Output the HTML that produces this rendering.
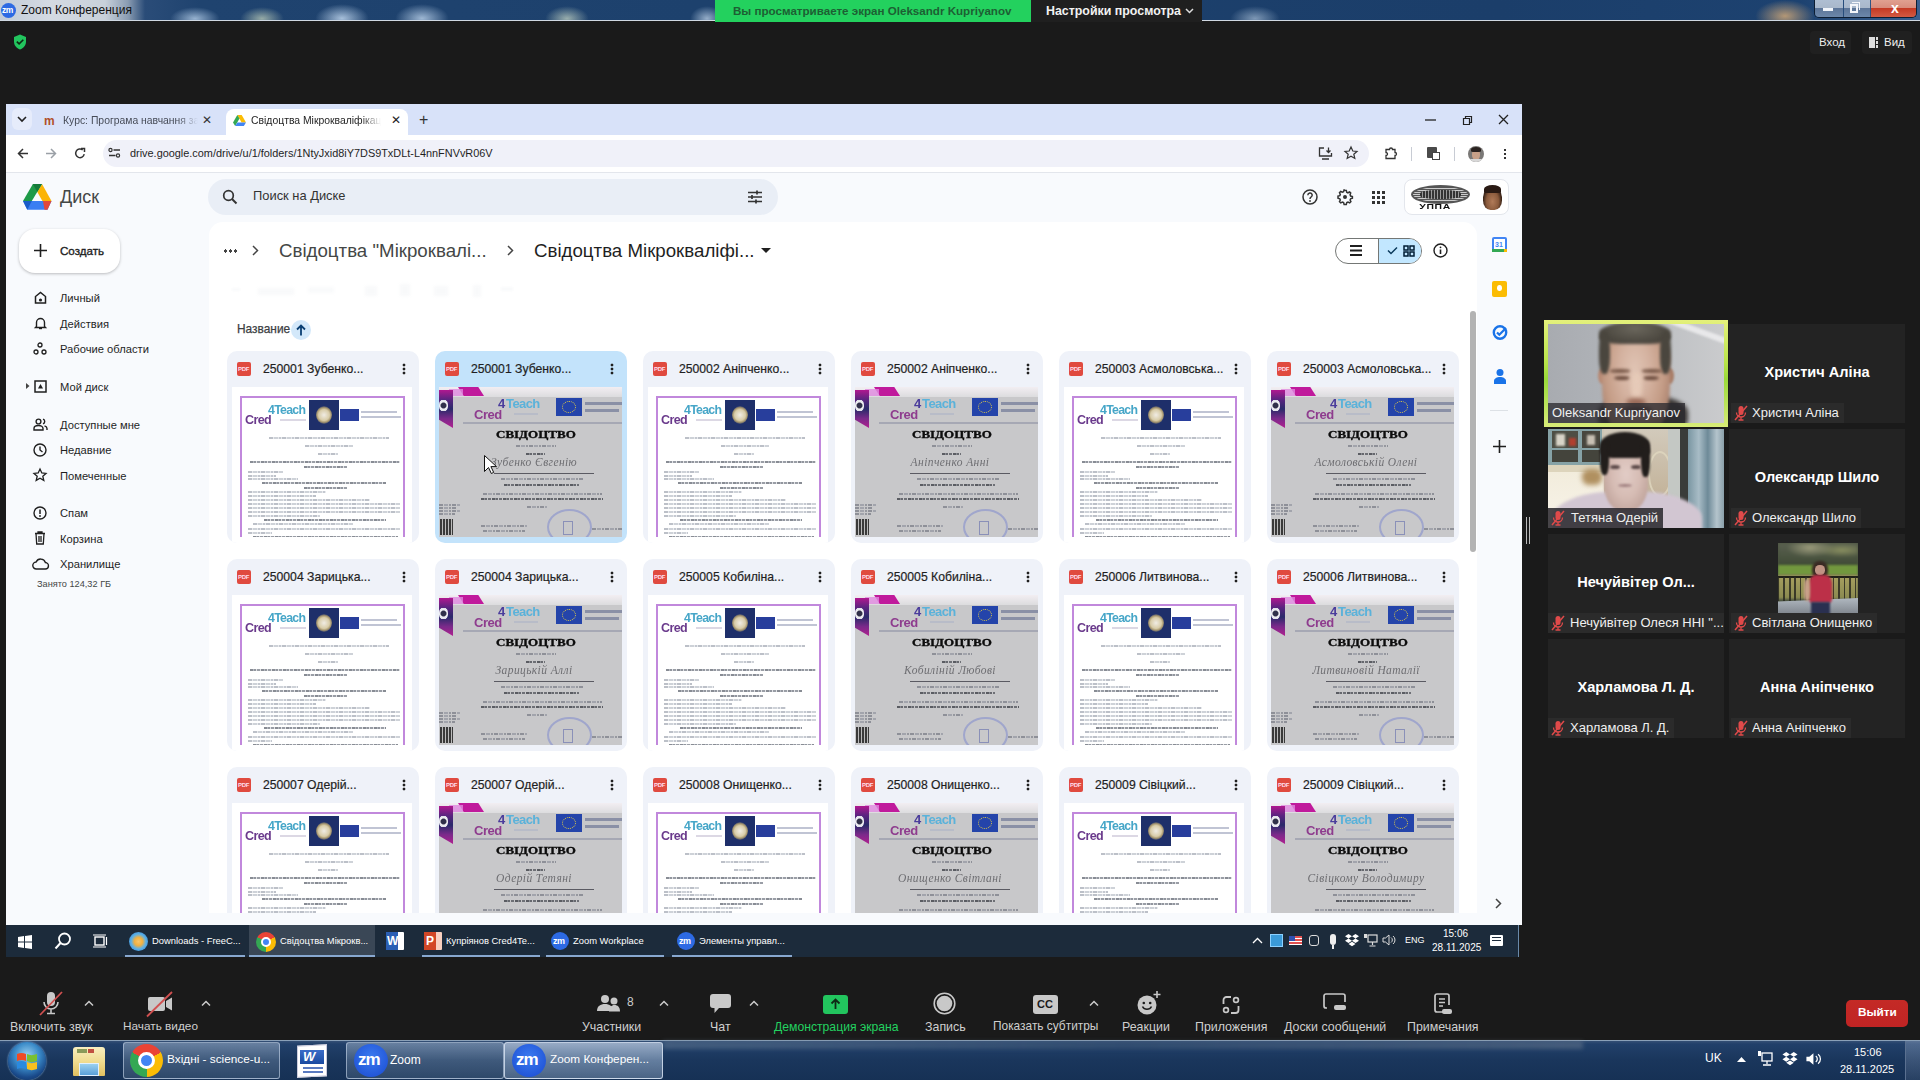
<!DOCTYPE html>
<html><head><meta charset="utf-8">
<style>
*{box-sizing:border-box;margin:0;padding:0}
html,body{width:1920px;height:1080px;overflow:hidden;background:#1a1a1a;font-family:"Liberation Sans",sans-serif}
.a{position:absolute}
.t{position:absolute;white-space:nowrap;line-height:1}
svg{position:absolute;overflow:visible}
.nav{position:absolute;left:60px;font-size:11.2px;color:#1f1f1f;white-space:nowrap;line-height:1}
.card{position:absolute;width:192px;height:192px;border-radius:10px;background:#eff2f9}
.card.sel{background:#c8e3fa}
.card .nm{position:absolute;left:36px;top:13px;font-size:12.5px;color:#1f1f1f;white-space:nowrap;line-height:1}
.card .pdf{position:absolute;left:10px;top:11px;width:13px;height:13px;background:#e2443a;border-radius:2px}
.card .pdf:after{content:"";position:absolute;left:2px;top:5px;width:9px;height:3px;background:#f6c9c4}
.card .kb{position:absolute;left:175px;top:12px;width:3px;height:12px;background:radial-gradient(circle,#333 1.2px,transparent 1.4px) 0 0/3px 4px}
.thw{position:absolute;left:5px;top:36px;width:180px;height:156px;background:#fff;border-radius:0 0 8px 8px;overflow:hidden}
.doc{position:absolute;left:8px;top:8px;width:166px;height:150px;border:2px solid #c46ed6;border-bottom:none;background:#fff}
.cert{position:absolute;left:2px;top:0;width:183px;height:150px;background:#c9c9cb}
.tl{position:absolute;height:2px;background:#9aa0aa}
.zt{position:absolute;background:#232323}
.zl{position:absolute;height:20px;background:#2b2b2b;color:#f0f0f0;font-size:13px;line-height:20px;white-space:nowrap;padding-right:5px}
.zn{position:absolute;color:#fff;font-size:14.6px;font-weight:bold;white-space:nowrap;line-height:1;text-align:center}
.dl{position:absolute;height:2px;background:repeating-linear-gradient(90deg,#888c94 0 3px,#b4b8c0 3px 4px,#92969e 4px 6px,rgba(180,184,192,.4) 6px 7px,#9a9ea6 7px 10px,rgba(180,184,192,.4) 10px 11px)}
.ll{position:absolute;height:2px;background:repeating-linear-gradient(90deg,#bcc0c8 0 4px,rgba(210,214,220,.5) 4px 5px,#ced2d8 5px 9px,rgba(210,214,220,.5) 9px 10px,#c4c8d0 10px 12px,rgba(210,214,220,.5) 12px 13px)}
.cll{position:absolute;height:2px;background:repeating-linear-gradient(90deg,#8e9098 0 4px,transparent 4px 5px,#a2a4ac 5px 9px,transparent 9px 10px,#96989f 10px 12px,transparent 12px 13px)}
.cdl{position:absolute;height:2px;background:repeating-linear-gradient(90deg,#5a5c62 0 3px,#8a8c92 3px 4px,#66686e 4px 6px,transparent 6px 7px,#6e7076 7px 10px,transparent 10px 11px)}
.tb{position:absolute;color:#cfcfcf;font-size:13px;white-space:nowrap;line-height:1;text-align:center}
</style></head>
<body>
<!-- ===== Windows title bar ===== -->
<div class="a" style="left:0;top:0;width:1920px;height:20px;background:linear-gradient(90deg,#c2ccd8 0,#d4dae2 50px,#c8d0da 105px,#8a9cb2 128px,#2a4c78 145px,#1f436f 200px,#1d416d 700px,#1b3e6a 1500px,#1d4270 1800px,#3a6090 1920px)"></div>
<div class="a" style="left:170px;top:7px;width:50px;height:13px;background:radial-gradient(ellipse at 50% 90%,rgba(190,215,240,.75),transparent 70%)"></div>
<div class="a" style="left:240px;top:7px;width:44px;height:13px;background:radial-gradient(ellipse at 50% 90%,rgba(200,215,190,.7),transparent 70%)"></div>
<div class="a" style="left:315px;top:4px;width:54px;height:16px;background:radial-gradient(ellipse at 50% 90%,rgba(200,222,245,.8),transparent 70%)"></div>
<div class="a" style="left:395px;top:4px;width:54px;height:16px;background:radial-gradient(ellipse at 50% 90%,rgba(200,222,245,.75),transparent 70%)"></div>
<div class="a" style="left:545px;top:6px;width:44px;height:14px;background:radial-gradient(ellipse at 50% 90%,rgba(205,220,200,.7),transparent 70%)"></div>
<div class="a" style="left:690px;top:6px;width:34px;height:14px;background:radial-gradient(ellipse at 50% 90%,rgba(200,220,240,.7),transparent 70%)"></div>
<div class="a" style="left:1230px;top:6px;width:50px;height:14px;background:radial-gradient(ellipse at 50% 90%,rgba(190,210,230,.6),transparent 70%)"></div>
<div class="a" style="left:1755px;top:0;width:60px;height:20px;background:radial-gradient(ellipse at 50% 80%,rgba(230,180,120,.75),transparent 70%)"></div>
<div class="a" style="left:1px;top:3px;width:15px;height:15px;border-radius:50%;background:#2d6ae3"></div>
<div class="t" style="left:2px;top:6px;font-size:8.5px;color:#fff;font-weight:bold;letter-spacing:-.5px">zm</div>
<div class="t" style="left:21px;top:4px;font-size:12px;color:#111">Zoom Конференция</div>
<div class="a" style="left:0;top:20px;width:1920px;height:1px;background:#d0d8e2"></div>
<!-- green banner -->
<div class="a" style="left:715px;top:0;width:316px;height:22px;background:#23d15e"></div>
<div class="t" style="left:733px;top:5px;font-size:11.6px;font-weight:bold;color:#1d5f33">Вы просматриваете экран Oleksandr Kupriyanov</div>
<div class="a" style="left:1031px;top:0;width:171px;height:22px;background:#1f1f1f"></div>
<div class="t" style="left:1046px;top:5px;font-size:12.4px;font-weight:bold;color:#f2f2f2">Настройки просмотра</div>
<svg style="left:1185px;top:8px" width="9" height="6"><path d="M1 1l3.5 3.5L8 1" stroke="#ddd" stroke-width="1.5" fill="none"/></svg>
<!-- window controls -->
<div class="a" style="left:1814px;top:0;width:103px;height:18px;border:1px solid #0d1e33;border-top:none;border-radius:0 0 5px 5px;overflow:hidden">
  <div class="a" style="left:0;top:0;width:28px;height:17px;background:linear-gradient(180deg,#aebed2 0,#a9b8cb 45%,#5d7699 50%,#6c87aa 100%)"></div>
  <div class="a" style="left:29px;top:0;width:26px;height:17px;background:linear-gradient(180deg,#aebed2 0,#a9b8cb 45%,#5d7699 50%,#6c87aa 100%)"></div>
  <div class="a" style="left:56px;top:0;width:47px;height:17px;background:linear-gradient(180deg,#e0a090 0,#d88c7c 45%,#c53a24 50%,#d25a42 100%)"></div>
  <div class="a" style="left:8px;top:8px;width:10px;height:3px;background:#f0f4fa"></div>
  <div class="a" style="left:37px;top:2px;width:8px;height:8px;border:1.5px solid #f4f6fa;border-left:none;border-bottom:none"></div><div class="a" style="left:35px;top:4px;width:8px;height:9px;border:2px solid #f4f6fa"></div>
  <div class="t" style="left:76px;top:1px;font-size:14px;font-weight:bold;color:#fff">x</div>
</div>

<!-- zoom top row -->
<svg style="left:13px;top:34px" width="14" height="16" viewBox="0 0 14 16"><path d="M7 0.5L1 3v4.5c0 3.8 2.6 6.8 6 8 3.4-1.2 6-4.2 6-8V3z" fill="#22c55e"/><path d="M3.8 7.6l2.3 2.3 4.2-4.2" stroke="#0c2a14" stroke-width="1.6" fill="none"/></svg>
<div class="a" style="left:1810px;top:31px;width:41px;height:23px;background:#202020;border-radius:4px"></div>
<div class="t" style="left:1819px;top:37px;font-size:11.5px;color:#eee">Вход</div>
<div class="a" style="left:1862px;top:31px;width:50px;height:23px;background:#202020;border-radius:4px"></div>
<div class="a" style="left:1869px;top:37px;width:6px;height:11px;background:#ddd"></div>
<div class="a" style="left:1876px;top:37px;width:2px;height:3px;background:#ddd"></div>
<div class="a" style="left:1876px;top:41px;width:2px;height:3px;background:#ddd"></div>
<div class="a" style="left:1876px;top:45px;width:2px;height:3px;background:#ddd"></div>
<div class="t" style="left:1884px;top:37px;font-size:11.5px;color:#eee">Вид</div>
<!-- ===== Browser window ===== -->
<div class="a" style="left:6px;top:104px;width:1516px;height:821px;background:#f8fafd;overflow:hidden"></div>
<!-- tab strip -->
<div class="a" style="left:6px;top:104px;width:1516px;height:31px;background:#d8e2f9"></div>
<div class="a" style="left:12px;top:108px;width:20px;height:22px;border-radius:6px;background:#e6ecfb"></div>
<svg style="left:17px;top:116px" width="10" height="6"><path d="M1 1l4 4 4-4" stroke="#222" stroke-width="1.6" fill="none"/></svg>
<div class="t" style="left:44px;top:115px;font-size:12px;font-weight:bold;color:#b0502a;letter-spacing:-1px">m</div>
<div class="a" style="left:63px;top:115px;width:135px;height:14px;overflow:hidden;-webkit-mask-image:linear-gradient(90deg,#000 85%,transparent)"><div class="t" style="left:0;top:1px;font-size:10.4px;color:#474c58">Курс: Програма навчання за і</div></div>
<div class="t" style="left:202px;top:114px;font-size:12px;color:#333">✕</div>
<!-- active tab -->
<div class="a" style="left:226px;top:109px;width:182px;height:27px;background:#fff;border-radius:8px 8px 0 0"></div>
<svg style="left:233px;top:115px" width="13" height="11" viewBox="0 0 13 11"><path d="M4.3 0h4.4l4.3 7.5H8.6z" fill="#fbbc04"/><path d="M4.3 0L0 7.5l2.2 3.5 4.3-7.5z" fill="#34a853"/><path d="M2.2 11h8.6L13 7.5H4.4z" fill="#4285f4"/></svg>
<div class="a" style="left:251px;top:115px;width:130px;height:14px;overflow:hidden;-webkit-mask-image:linear-gradient(90deg,#000 85%,transparent)"><div class="t" style="left:0;top:1px;font-size:10.4px;color:#1f1f1f">Свідоцтва Мікрокваліфікація:</div></div>
<div class="t" style="left:391px;top:114px;font-size:12px;color:#222">✕</div>
<div class="t" style="left:419px;top:112px;font-size:16px;color:#333">+</div>
<svg style="left:1425px;top:119px" width="11" height="2"><path d="M0 1h11" stroke="#222" stroke-width="1.3"/></svg>
<svg style="left:1462px;top:115px" width="11" height="10"><path d="M1.5 3.5h6v6h-6z M3.5 3.5V1.5h6v6h-2" stroke="#222" stroke-width="1.2" fill="none"/></svg>
<svg style="left:1498px;top:114px" width="11" height="11"><path d="M1 1l9 9M10 1l-9 9" stroke="#222" stroke-width="1.3"/></svg>
<!-- address row -->
<div class="a" style="left:6px;top:135px;width:1516px;height:37px;background:#fff"></div>
<svg style="left:17px;top:148px" width="12" height="11" viewBox="0 0 12 11"><path d="M11 5.5H1.5M6 1L1.5 5.5 6 10" stroke="#333" stroke-width="1.5" fill="none"/></svg>
<svg style="left:45px;top:148px" width="12" height="11" viewBox="0 0 12 11"><path d="M1 5.5h9.5M6 1l4.5 4.5L6 10" stroke="#9aa0a6" stroke-width="1.5" fill="none"/></svg>
<svg style="left:74px;top:147px" width="12" height="13" viewBox="0 0 12 13"><path d="M10.2 7.2A4.3 4.3 0 1 1 8.7 3" stroke="#333" stroke-width="1.5" fill="none"/><path d="M7 1.5h3.5V5" stroke="#333" stroke-width="1.5" fill="none"/></svg>
<div class="a" style="left:103px;top:140px;width:1266px;height:27px;border-radius:14px;background:#f0f1f9"></div>
<svg style="left:108px;top:147px" width="13" height="12" viewBox="0 0 13 12"><circle cx="2.5" cy="3" r="1.6" stroke="#333" stroke-width="1.2" fill="none"/><path d="M5.5 3h6.5M1 8.5h6.5" stroke="#333" stroke-width="1.4"/><circle cx="10" cy="8.5" r="1.6" stroke="#333" stroke-width="1.2" fill="none"/></svg>
<div class="t" style="left:130px;top:148px;font-size:10.9px;color:#1f1f1f">drive.google.com/drive/u/1/folders/1NtyJxid8iY7DS9TxDLt-L4nnFNVvR06V</div>
<svg style="left:1318px;top:147px" width="15" height="13" viewBox="0 0 15 13"><path d="M6 1H1.5v8h12V6" stroke="#333" stroke-width="1.3" fill="none"/><path d="M4 12h7M10.5 0.5v5M8.5 3.5l2 2 2-2" stroke="#333" stroke-width="1.3" fill="none"/></svg>
<svg style="left:1344px;top:146px" width="14" height="14" viewBox="0 0 14 14"><path d="M7 1l1.8 4 4.2.4-3.2 2.8 1 4.2L7 10.2 3.2 12.4l1-4.2L1 5.4l4.2-.4z" stroke="#333" stroke-width="1.2" fill="none"/></svg>
<svg style="left:1384px;top:146px" width="14" height="14" viewBox="0 0 14 14"><path d="M2 3.5h3.5a1.5 1.5 0 0 1 3 0H11v3a1.5 1.5 0 0 1 0 3v3H2v-3a1.5 1.5 0 0 0 0-3z" stroke="#333" stroke-width="1.3" fill="none"/></svg>
<div class="a" style="left:1411px;top:147px;width:1px;height:14px;background:#c8ccd4"></div>
<div class="a" style="left:1427px;top:147px;width:10px;height:11px;background:#4a4a4a;border-radius:1px"></div>
<div class="a" style="left:1432px;top:152px;width:8px;height:8px;background:#fff;border:1.5px solid #444"></div>
<div class="a" style="left:1454px;top:147px;width:1px;height:14px;background:#c8ccd4"></div>
<div class="a" style="left:1468px;top:146px;width:16px;height:16px;border-radius:50%;overflow:hidden;background:#7a7876"><div class="a" style="left:4px;top:3px;width:8px;height:11px;border-radius:45%;background:#c8a088"></div><div class="a" style="left:3px;top:1px;width:10px;height:5px;border-radius:50% 50% 20% 20%;background:#2a2220"></div><div class="a" style="left:2px;top:13px;width:12px;height:4px;background:#d8d8d8"></div></div>
<div class="a" style="left:1504px;top:148px;width:2px;height:11px;background:radial-gradient(circle,#333 1px,transparent 1.2px) 0 0/2px 4px"></div>
<div class="a" style="left:6px;top:172px;width:1516px;height:1px;background:#e3e6ec"></div>

<!-- ===== Drive header ===== -->
<svg style="left:23px;top:184px" width="29" height="26" viewBox="0 0 29 26"><path d="M9.9 0H19L8.8 16.9H0z" fill="#1e9a48"/><path d="M19 0l9.5 16.9h-9.1L14.3 8.1z" fill="#fbb406"/><path d="M0 16.9h28.5l-4 8.8H4.3z" fill="#3a7ef2"/><path d="M20 16.9h8.5l-4 8.8h-3z" fill="#e0483c"/><path d="M0 16.9h8.8l-4.5 8.8z" fill="#1a5cc8"/><path d="M9.9 0H19L14.3 8.1z" fill="#157a3a"/></svg>
<div class="t" style="left:60px;top:188px;font-size:18px;color:#444746">Диск</div>
<div class="a" style="left:208px;top:179px;width:570px;height:36px;border-radius:18px;background:#e9eef6"></div>
<svg style="left:222px;top:189px" width="16" height="16" viewBox="0 0 16 16"><circle cx="6.5" cy="6.5" r="4.8" stroke="#333" stroke-width="1.7" fill="none"/><path d="M10 10l4.5 4.5" stroke="#333" stroke-width="1.9"/></svg>
<div class="t" style="left:253px;top:190px;font-size:12.9px;color:#333">Поиск на Диске</div>
<svg style="left:747px;top:190px" width="16" height="14" viewBox="0 0 16 14"><path d="M1 2.5h14M1 7h14M1 11.5h14" stroke="#333" stroke-width="1.5"/><path d="M10 0.5v4M5 5v4M9 9.5v4" stroke="#333" stroke-width="1.7"/></svg>
<svg style="left:1302px;top:189px" width="16" height="16" viewBox="0 0 16 16"><circle cx="8" cy="8" r="7" stroke="#333" stroke-width="1.5" fill="none"/><path d="M5.8 6.2a2.2 2.2 0 1 1 3.2 2c-.8.4-1 .9-1 1.7" stroke="#333" stroke-width="1.5" fill="none"/><circle cx="8" cy="12" r=".9" fill="#333"/></svg>
<svg style="left:1337px;top:189px" width="16" height="16" viewBox="0 0 16 16"><path d="M8 1.2l1.3.2.4 1.8 1.2.6 1.7-.8 1.1 1 -.6 1.8.5 1.2 1.8.5v1.8l-1.8.5-.5 1.2.8 1.7-1.2 1.2-1.7-.8-1.2.5-.5 1.8H7.1l-.5-1.8-1.2-.5-1.7.8-1.2-1.2.8-1.7-.5-1.2-1.8-.5V7.1l1.8-.5.5-1.2-.8-1.7 1.2-1.2 1.7.8 1.2-.5.5-1.8z" stroke="#333" stroke-width="1.5" fill="none"/><circle cx="8" cy="8" r="2" fill="#333"/></svg>
<div class="a" style="left:1371px;top:190px;width:15px;height:15px;background:radial-gradient(circle,#333 1.5px,transparent 1.9px) 0 0/5px 5px"></div>
<div class="a" style="left:1404px;top:179px;width:105px;height:36px;border-radius:8px;background:#fff;border:1px solid #e3e6ec"></div>
<div class="a" style="left:1411px;top:185px;width:59px;height:19px;border-radius:50%;border:2px solid #555;background:repeating-linear-gradient(0deg,#555 0 1px,#ccc 1px 2px)"></div><div class="a" style="left:1420px;top:190px;width:41px;height:9px;border-radius:40%;background:repeating-linear-gradient(90deg,#333 0 2px,#999 2px 3px)"></div>
<div class="t" style="left:1423px;top:203px;font-size:8px;font-weight:bold;color:#111;letter-spacing:.5px;transform:scaleX(1.3)">УППА</div>
<div class="a" style="left:1483px;top:186px;width:19px;height:24px;border-radius:45% 45% 40% 40%;background:radial-gradient(ellipse at 50% 65%,#b07a58 0,#8a5a3c 45%,#3a2418 70%,rgba(255,255,255,0) 80%)"></div><div class="a" style="left:1484px;top:185px;width:17px;height:8px;border-radius:50% 50% 10% 10%;background:#2a1a14"></div>

<!-- ===== Drive sidebar ===== -->
<div class="a" style="left:19px;top:229px;width:101px;height:44px;border-radius:16px;background:#fff;box-shadow:0 1px 3px rgba(0,0,0,.25)"></div>
<svg style="left:34px;top:244px" width="13" height="13"><path d="M6.5 0v13M0 6.5h13" stroke="#1f1f1f" stroke-width="1.6"/></svg>
<div class="t" style="left:60px;top:245px;font-size:11.6px;color:#1f1f1f;-webkit-text-stroke:.35px #1f1f1f">Создать</div>
<!-- nav items -->
<svg style="left:34px;top:291px" width="13" height="13" viewBox="0 0 13 13"><path d="M1.5 12V5.5L6.5 1.5l5 4V12z" stroke="#1f1f1f" stroke-width="1.5" fill="none"/><circle cx="6.5" cy="9" r="1.6" fill="#1f1f1f"/></svg>
<div class="nav" style="top:293px">Личный</div>
<svg style="left:34px;top:316px" width="13" height="14" viewBox="0 0 13 14"><path d="M2.5 10.5V6.5a4 4 0 0 1 8 0v4l1 1h-10z" stroke="#1f1f1f" stroke-width="1.4" fill="none"/><path d="M5 12.5h3" stroke="#1f1f1f" stroke-width="1.4"/></svg>
<div class="nav" style="top:319px">Действия</div>
<svg style="left:33px;top:342px" width="14" height="13" viewBox="0 0 14 13"><circle cx="7" cy="3" r="2" stroke="#1f1f1f" stroke-width="1.3" fill="none"/><circle cx="3" cy="10" r="2" stroke="#1f1f1f" stroke-width="1.3" fill="none"/><circle cx="11" cy="10" r="2" stroke="#1f1f1f" stroke-width="1.3" fill="none"/></svg>
<div class="nav" style="top:344px">Рабочие области</div>
<svg style="left:26px;top:383px" width="4" height="6"><path d="M0 0l3.5 3L0 6z" fill="#444"/></svg>
<svg style="left:34px;top:380px" width="13" height="13" viewBox="0 0 13 13"><rect x="1" y="1" width="11" height="11" stroke="#1f1f1f" stroke-width="1.5" fill="none"/><path d="M4 8.5h5L6.5 4z" fill="#1f1f1f"/></svg>
<div class="nav" style="top:382px">Мой диск</div>
<svg style="left:33px;top:418px" width="15" height="13" viewBox="0 0 15 13"><circle cx="5.5" cy="3.5" r="2.4" stroke="#1f1f1f" stroke-width="1.4" fill="none"/><path d="M1 12v-1.5c0-2 2-3 4.5-3s4.5 1 4.5 3V12z" stroke="#1f1f1f" stroke-width="1.4" fill="none"/><path d="M10 1.2a2.4 2.4 0 0 1 0 4.6M11.5 7.8c1.5.5 2.5 1.3 2.5 2.7V12" stroke="#1f1f1f" stroke-width="1.4" fill="none"/></svg>
<div class="nav" style="top:420px">Доступные мне</div>
<svg style="left:33px;top:443px" width="14" height="14" viewBox="0 0 14 14"><circle cx="7" cy="7" r="6" stroke="#1f1f1f" stroke-width="1.4" fill="none"/><path d="M7 3.5V7l2.5 2" stroke="#1f1f1f" stroke-width="1.4" fill="none"/></svg>
<div class="nav" style="top:445px">Недавние</div>
<svg style="left:33px;top:468px" width="14" height="14" viewBox="0 0 14 14"><path d="M7 1l1.8 4 4.2.4-3.2 2.8 1 4.2L7 10.2 3.2 12.4l1-4.2L1 5.4l4.2-.4z" stroke="#1f1f1f" stroke-width="1.3" fill="none"/></svg>
<div class="nav" style="top:471px">Помеченные</div>
<svg style="left:33px;top:506px" width="14" height="14" viewBox="0 0 14 14"><circle cx="7" cy="7" r="6" stroke="#1f1f1f" stroke-width="1.4" fill="none"/><path d="M7 3.5v4.5" stroke="#1f1f1f" stroke-width="1.5"/><circle cx="7" cy="10" r=".9" fill="#1f1f1f"/></svg>
<div class="nav" style="top:508px">Спам</div>
<svg style="left:34px;top:531px" width="12" height="14" viewBox="0 0 12 14"><path d="M1 2.5h10M4 2.5V1h4v1.5M2 2.5l.7 10.5h6.6L10 2.5M5 5v6M7 5v6" stroke="#1f1f1f" stroke-width="1.3" fill="none"/></svg>
<div class="nav" style="top:534px">Корзина</div>
<svg style="left:32px;top:558px" width="17" height="12" viewBox="0 0 17 12"><path d="M4.5 11a3.5 3.5 0 0 1-.4-7A5 5 0 0 1 13.4 4.5 3.2 3.2 0 0 1 13 11z" stroke="#1f1f1f" stroke-width="1.4" fill="none"/></svg>
<div class="nav" style="top:559px">Хранилище</div>
<div class="t" style="left:37px;top:580px;font-size:9.2px;color:#444746">Занято 124,32 ГБ</div>

<!-- ===== Main panel ===== -->
<div class="a" style="left:209px;top:222px;width:1268px;height:703px;background:#fff;border-radius:14px 14px 0 0"></div>
<div class="a" style="left:223px;top:249px;width:14px;height:4px;background:radial-gradient(circle,#444 1.5px,transparent 1.8px) 0 0/5px 4px"></div>
<svg style="left:252px;top:245px" width="7" height="11"><path d="M1 1l4.5 4.5L1 10" stroke="#444" stroke-width="1.5" fill="none"/></svg>
<div class="t" style="left:279px;top:242px;font-size:18.7px;color:#444746">Свідоцтва "Мікроквалі...</div>
<svg style="left:507px;top:245px" width="7" height="11"><path d="M1 1l4.5 4.5L1 10" stroke="#444" stroke-width="1.5" fill="none"/></svg>
<div class="t" style="left:534px;top:242px;font-size:18.7px;color:#1f1f1f">Свідоцтва Мікрокваліфі...</div>
<svg style="left:761px;top:248px" width="10" height="6"><path d="M0 0h10L5 5z" fill="#1f1f1f"/></svg>
<!-- view toggle -->
<div class="a" style="left:1335px;top:238px;width:87px;height:26px;border-radius:13px;border:1px solid #747775;background:#fff;overflow:hidden">
  <div class="a" style="left:42px;top:0;width:45px;height:26px;background:#c2e7ff;border-left:1px solid #747775"></div>
</div>
<svg style="left:1350px;top:245px" width="12" height="11"><path d="M0 1h12M0 5.5h12M0 10h12" stroke="#1f1f1f" stroke-width="1.8"/></svg>
<svg style="left:1387px;top:246px" width="11" height="9"><path d="M1 4.5l3 3L10 1.5" stroke="#0b3a5c" stroke-width="1.5" fill="none"/></svg>
<svg style="left:1403px;top:245px" width="12" height="12" viewBox="0 0 12 12"><path d="M1 1h4v4H1zM7 1h4v4H7zM1 7h4v4H1zM7 7h4v4H7z" stroke="#001d35" stroke-width="1.5" fill="none"/></svg>
<svg style="left:1433px;top:243px" width="15" height="15" viewBox="0 0 15 15"><circle cx="7.5" cy="7.5" r="6.5" stroke="#1f1f1f" stroke-width="1.4" fill="none"/><path d="M7.5 6.5v4.5" stroke="#1f1f1f" stroke-width="1.6"/><circle cx="7.5" cy="4.3" r=".9" fill="#1f1f1f"/></svg>
<!-- faded filter row -->
<div class="a" style="left:232px;top:288px;width:8px;height:3px;background:rgba(215,220,228,.15);filter:blur(1px)"></div>
<div class="a" style="left:258px;top:288px;width:36px;height:7px;background:rgba(215,220,228,.18);filter:blur(1.5px)"></div>
<div class="a" style="left:308px;top:287px;width:26px;height:6px;background:rgba(215,220,228,.15);filter:blur(1.5px)"></div>
<div class="a" style="left:365px;top:286px;width:12px;height:10px;background:rgba(215,220,228,.18);filter:blur(1.5px)"></div>
<div class="a" style="left:400px;top:284px;width:10px;height:12px;background:rgba(215,220,228,.18);filter:blur(1.5px)"></div>
<div class="a" style="left:434px;top:286px;width:14px;height:10px;background:rgba(215,220,228,.18);filter:blur(1.5px)"></div>
<div class="a" style="left:473px;top:285px;width:8px;height:12px;background:rgba(215,220,228,.18);filter:blur(1.5px)"></div>
<div class="a" style="left:501px;top:287px;width:12px;height:4px;background:rgba(215,220,228,.15);filter:blur(1px)"></div>
<!-- sort header -->
<div class="t" style="left:237px;top:324px;font-size:11.9px;color:#3c4043;-webkit-text-stroke:.25px #3c4043">Название</div>
<div class="a" style="left:291px;top:320px;width:20px;height:20px;border-radius:50%;background:#d3e8fa"></div>
<svg style="left:296px;top:324px" width="10" height="12" viewBox="0 0 10 12"><path d="M5 11.5V1.5M1 5.5l4-4 4 4" stroke="#0a3f73" stroke-width="1.8" fill="none"/></svg>
<!-- scrollbar -->
<div class="a" style="left:1470px;top:311px;width:6px;height:241px;border-radius:3px;background:#b3b3b3"></div>
<!-- right side panel icons -->
<div class="a" style="left:1492px;top:237px;width:15px;height:15px;border-radius:2px;background:#4285f4"></div>
<div class="a" style="left:1494px;top:239px;width:11px;height:10px;background:#fff"></div>
<div class="a" style="left:1492px;top:249px;width:12px;height:3px;background:#34a853"></div>
<div class="a" style="left:1504px;top:249px;width:3px;height:3px;background:#fbbc04"></div>
<div class="t" style="left:1495px;top:241px;font-size:7px;color:#4285f4;font-weight:bold">31</div>
<div class="a" style="left:1492px;top:281px;width:15px;height:16px;border-radius:2px;background:#fbbc04"></div>
<div class="a" style="left:1497px;top:285px;width:5px;height:6px;border-radius:50% 50% 40% 40%;background:#fff"></div>
<svg style="left:1492px;top:324px" width="16" height="16" viewBox="0 0 16 16"><circle cx="8" cy="8.5" r="6.2" stroke="#1a73e8" stroke-width="2.4" fill="none"/><path d="M5 8.5l2.3 2.3L14 4" stroke="#1a73e8" stroke-width="2.2" fill="none"/></svg>
<svg style="left:1493px;top:368px" width="14" height="16" viewBox="0 0 14 16"><circle cx="7" cy="4.5" r="3.5" fill="#1a73e8"/><path d="M1 16v-3c0-2.5 3-4 6-4s6 1.5 6 4v3z" fill="#1a73e8"/></svg>
<div class="a" style="left:1490px;top:410px;width:18px;height:1px;background:#dde1e6"></div>
<svg style="left:1493px;top:440px" width="13" height="13"><path d="M6.5 0v13M0 6.5h13" stroke="#1f1f1f" stroke-width="1.6"/></svg>
<svg style="left:1495px;top:898px" width="7" height="11"><path d="M1 1l4.5 4.5L1 10" stroke="#444" stroke-width="1.5" fill="none"/></svg>
<div class="a" style="left:209px;top:300px;width:1260px;height:613px;overflow:hidden">
<div class="a" style="left:18px;top:51px;width:192px;height:192px;border-radius:10px;background:#eff2f9;overflow:hidden">
<div class="a" style="left:10px;top:11px;width:14px;height:14px;background:#e04a3f;border-radius:2px"></div>
<div class="t" style="left:11px;top:15px;font-size:6px;font-weight:bold;color:#fde;letter-spacing:-.3px">PDF</div>
<div class="t" style="left:36px;top:12px;font-size:12.2px;color:#1f1f1f;-webkit-text-stroke:.2px #1f1f1f">250001 Зубенко...</div>
<div class="a" style="left:175px;top:12px;width:4px;height:12px;background:radial-gradient(circle,#1f1f1f 1.2px,transparent 1.7px) 0 0/4px 4px"></div>
<div class="a" style="left:5px;top:36px;width:180px;height:156px;background:#fff"></div>
<div class="a" style="left:13px;top:45px;width:165px;height:141px;border:2px solid #c188dc;border-bottom:none;overflow:hidden;filter:blur(.35px)">
<div class="t" style="left:3px;top:16px;font-size:12.5px;font-weight:bold;color:#6a3a8c;letter-spacing:-.6px">Cred</div>
<div class="t" style="left:26px;top:6px;font-size:12.3px;font-weight:bold;color:#46a6c8;letter-spacing:-.7px">4Teach</div>
<div class="a" style="left:38px;top:21px;width:26px;height:2px;background:#dcd8e4"></div>
<div class="a" style="left:67px;top:2px;width:30px;height:30px;background:#1e2f6a"></div>
<div class="a" style="left:74px;top:8px;width:16px;height:18px;border-radius:50%;background:radial-gradient(circle,#f0ece4 0,#d8cca8 45%,#a89870 60%,#1e2f6a 78%)"></div>
<div class="a" style="left:98px;top:11px;width:19px;height:12px;background:#283e9c"></div>
<div class="a" style="left:119px;top:13px;width:36px;height:2px;background:#c0c4d4"></div>
<div class="a" style="left:119px;top:18px;width:40px;height:2px;background:#c0c4d4"></div>
<div class="ll" style="left:27px;top:39px;width:120px"></div>
<div class="ll" style="left:63px;top:47px;width:48px"></div>
<div class="ll" style="left:76px;top:55px;width:20px"></div>
<div class="dl" style="left:8px;top:63px;width:150px"></div>
<div class="dl" style="left:62px;top:68px;width:43px"></div>
<div class="ll" style="left:6px;top:73px;width:35px"></div>
<div class="ll" style="left:6px;top:77px;width:28px"></div>
<div class="ll" style="left:6px;top:80px;width:50px"></div>
<div class="dl" style="left:20px;top:84px;width:124px"></div>
<div class="dl" style="left:62px;top:89px;width:43px"></div>
<div class="ll" style="left:6px;top:93px;width:78px"></div>
<div class="ll" style="left:6px;top:97px;width:68px"></div>
<div class="ll" style="left:6px;top:101px;width:122px"></div>
<div class="ll" style="left:6px;top:105px;width:152px"></div>
<div class="ll" style="left:6px;top:109px;width:152px"></div>
<div class="ll" style="left:6px;top:113px;width:152px"></div>
<div class="ll" style="left:6px;top:117px;width:72px"></div>
<div class="dl" style="left:22px;top:121px;width:122px"></div>
<div class="ll" style="left:11px;top:125px;width:100px"></div>
<div class="ll" style="left:6px;top:130px;width:152px"></div>
<div class="ll" style="left:6px;top:134px;width:24px"></div>
<div class="dl" style="left:11px;top:138px;width:145px"></div>
</div>
</div>
<div class="a" style="left:226px;top:51px;width:192px;height:192px;border-radius:10px;background:#c3e3fb;overflow:hidden">
<div class="a" style="left:10px;top:11px;width:14px;height:14px;background:#e04a3f;border-radius:2px"></div>
<div class="t" style="left:11px;top:15px;font-size:6px;font-weight:bold;color:#fde;letter-spacing:-.3px">PDF</div>
<div class="t" style="left:36px;top:12px;font-size:12.2px;color:#1f1f1f;-webkit-text-stroke:.2px #1f1f1f">250001 Зубенко...</div>
<div class="a" style="left:175px;top:12px;width:4px;height:12px;background:radial-gradient(circle,#1f1f1f 1.2px,transparent 1.7px) 0 0/4px 4px"></div>
<div class="a" style="left:4px;top:36px;width:183px;height:150px;background:#c8c8ca;overflow:hidden;filter:blur(.3px)">
<div class="a" style="left:0;top:0;width:183px;height:10px;background:linear-gradient(180deg,#f2eef2,#dcdcde)"></div>
<div class="a" style="left:19px;top:0;width:26px;height:9px;background:#c01a9c;clip-path:polygon(0 0,78% 0,100% 100%,22% 100%)"></div>
<div class="a" style="left:10px;top:2px;width:14px;height:7px;background:#e088e0;opacity:.8"></div>
<div class="a" style="left:0;top:3px;width:14px;height:38px;background:linear-gradient(180deg,#b01890 0,#5a2480 25%,#2a2a6a 50%,#7a2a8a 75%,#b02090 100%);clip-path:polygon(0 0,100% 0,100% 100%,0 78%)"></div>
<div class="a" style="left:0;top:12px;width:9px;height:13px;border-radius:45%;background:radial-gradient(circle,#30304a 0,#30304a 30%,#f0f0f4 45%,#e0e0ea 70%,transparent 75%)"></div>
<div class="t" style="left:35px;top:21px;font-size:13px;font-weight:bold;color:#8e3c8e;letter-spacing:-.5px">Cred</div>
<div class="t" style="left:59px;top:10px;font-size:13px;font-weight:bold;color:#4a3c9c">4</div>
<div class="t" style="left:67px;top:10px;font-size:13px;font-weight:bold;color:#5ab2da;letter-spacing:-.6px">Teach</div>
<div class="a" style="left:75px;top:26px;width:24px;height:2px;background:#b8bcc8"></div>
<div class="a" style="left:117px;top:11px;width:26px;height:18px;background:#2444aa"></div>
<div class="a" style="left:123px;top:14px;width:14px;height:12px;border-radius:50%;border:1px dotted #e8d040"></div>
<div class="a" style="left:146px;top:15px;width:37px;height:3px;background:#8a90a6"></div>
<div class="a" style="left:146px;top:22px;width:34px;height:3px;background:#8a90a6"></div>
<div class="a" style="left:24px;top:35px;width:159px;height:2px;background:#a6a8b4"></div>
<div class="t" style="left:57px;top:42px;font-size:13px;font-weight:bold;color:#0d0d0d;font-family:'Liberation Serif',serif;transform:scaleY(.8);transform-origin:0 0;-webkit-text-stroke:.4px #000">СВІДОЦТВО</div>
<div class="cll" style="left:77px;top:58px;width:40px"></div>
<div class="cdl" style="left:87px;top:66px;width:19px"></div>
<div class="a" style="left:55px;top:86px;width:100px;height:1px;background:#5a5a62"></div>
<div class="cll" style="left:62px;top:91px;width:83px"></div>
<div class="cdl" style="left:65px;top:97px;width:75px"></div>
<div class="cll" style="left:44px;top:106px;width:119px"></div>
<div class="cdl" style="left:42px;top:111px;width:122px"></div>
<div class="cll" style="left:88px;top:119px;width:20px"></div>
<div class="cll" style="left:0px;top:117px;width:21px"></div>
<div class="cll" style="left:0px;top:120px;width:18px"></div>
<div class="cll" style="left:0px;top:123px;width:21px"></div>
<div class="cll" style="left:0px;top:126px;width:16px"></div>
<div class="cll" style="left:42px;top:138px;width:46px"></div>
<div class="cll" style="left:44px;top:143px;width:42px"></div>
<div class="cll" style="left:153px;top:141px;width:30px"></div>
<div class="t" style="left:10px;top:70px;width:170px;text-align:center;font-size:11.5px;font-style:italic;color:#6e6e72;font-family:'Liberation Serif',serif;letter-spacing:.4px">Зубенко Євгенію</div>
<div class="a" style="left:1px;top:132px;width:13px;height:16px;background:repeating-linear-gradient(90deg,#3a3a3a 0 2px,#bbb 2px 3px)"></div>
<div class="a" style="left:108px;top:122px;width:45px;height:36px;border-radius:50%;border:2px solid #a0a6cc"></div>
<div class="a" style="left:124px;top:134px;width:10px;height:14px;border:1px solid #8a90b8"></div>
</div>
</div>
<div class="a" style="left:434px;top:51px;width:192px;height:192px;border-radius:10px;background:#eff2f9;overflow:hidden">
<div class="a" style="left:10px;top:11px;width:14px;height:14px;background:#e04a3f;border-radius:2px"></div>
<div class="t" style="left:11px;top:15px;font-size:6px;font-weight:bold;color:#fde;letter-spacing:-.3px">PDF</div>
<div class="t" style="left:36px;top:12px;font-size:12.2px;color:#1f1f1f;-webkit-text-stroke:.2px #1f1f1f">250002 Аніпченко...</div>
<div class="a" style="left:175px;top:12px;width:4px;height:12px;background:radial-gradient(circle,#1f1f1f 1.2px,transparent 1.7px) 0 0/4px 4px"></div>
<div class="a" style="left:5px;top:36px;width:180px;height:156px;background:#fff"></div>
<div class="a" style="left:13px;top:45px;width:165px;height:141px;border:2px solid #c188dc;border-bottom:none;overflow:hidden;filter:blur(.35px)">
<div class="t" style="left:3px;top:16px;font-size:12.5px;font-weight:bold;color:#6a3a8c;letter-spacing:-.6px">Cred</div>
<div class="t" style="left:26px;top:6px;font-size:12.3px;font-weight:bold;color:#46a6c8;letter-spacing:-.7px">4Teach</div>
<div class="a" style="left:38px;top:21px;width:26px;height:2px;background:#dcd8e4"></div>
<div class="a" style="left:67px;top:2px;width:30px;height:30px;background:#1e2f6a"></div>
<div class="a" style="left:74px;top:8px;width:16px;height:18px;border-radius:50%;background:radial-gradient(circle,#f0ece4 0,#d8cca8 45%,#a89870 60%,#1e2f6a 78%)"></div>
<div class="a" style="left:98px;top:11px;width:19px;height:12px;background:#283e9c"></div>
<div class="a" style="left:119px;top:13px;width:36px;height:2px;background:#c0c4d4"></div>
<div class="a" style="left:119px;top:18px;width:40px;height:2px;background:#c0c4d4"></div>
<div class="ll" style="left:27px;top:39px;width:120px"></div>
<div class="ll" style="left:63px;top:47px;width:48px"></div>
<div class="ll" style="left:76px;top:55px;width:20px"></div>
<div class="dl" style="left:8px;top:63px;width:150px"></div>
<div class="dl" style="left:62px;top:68px;width:43px"></div>
<div class="ll" style="left:6px;top:73px;width:35px"></div>
<div class="ll" style="left:6px;top:77px;width:28px"></div>
<div class="ll" style="left:6px;top:80px;width:50px"></div>
<div class="dl" style="left:20px;top:84px;width:124px"></div>
<div class="dl" style="left:62px;top:89px;width:43px"></div>
<div class="ll" style="left:6px;top:93px;width:78px"></div>
<div class="ll" style="left:6px;top:97px;width:68px"></div>
<div class="ll" style="left:6px;top:101px;width:122px"></div>
<div class="ll" style="left:6px;top:105px;width:152px"></div>
<div class="ll" style="left:6px;top:109px;width:152px"></div>
<div class="ll" style="left:6px;top:113px;width:152px"></div>
<div class="ll" style="left:6px;top:117px;width:72px"></div>
<div class="dl" style="left:22px;top:121px;width:122px"></div>
<div class="ll" style="left:11px;top:125px;width:100px"></div>
<div class="ll" style="left:6px;top:130px;width:152px"></div>
<div class="ll" style="left:6px;top:134px;width:24px"></div>
<div class="dl" style="left:11px;top:138px;width:145px"></div>
</div>
</div>
<div class="a" style="left:642px;top:51px;width:192px;height:192px;border-radius:10px;background:#eff2f9;overflow:hidden">
<div class="a" style="left:10px;top:11px;width:14px;height:14px;background:#e04a3f;border-radius:2px"></div>
<div class="t" style="left:11px;top:15px;font-size:6px;font-weight:bold;color:#fde;letter-spacing:-.3px">PDF</div>
<div class="t" style="left:36px;top:12px;font-size:12.2px;color:#1f1f1f;-webkit-text-stroke:.2px #1f1f1f">250002 Аніпченко...</div>
<div class="a" style="left:175px;top:12px;width:4px;height:12px;background:radial-gradient(circle,#1f1f1f 1.2px,transparent 1.7px) 0 0/4px 4px"></div>
<div class="a" style="left:4px;top:36px;width:183px;height:150px;background:#c8c8ca;overflow:hidden;filter:blur(.3px)">
<div class="a" style="left:0;top:0;width:183px;height:10px;background:linear-gradient(180deg,#f2eef2,#dcdcde)"></div>
<div class="a" style="left:19px;top:0;width:26px;height:9px;background:#c01a9c;clip-path:polygon(0 0,78% 0,100% 100%,22% 100%)"></div>
<div class="a" style="left:10px;top:2px;width:14px;height:7px;background:#e088e0;opacity:.8"></div>
<div class="a" style="left:0;top:3px;width:14px;height:38px;background:linear-gradient(180deg,#b01890 0,#5a2480 25%,#2a2a6a 50%,#7a2a8a 75%,#b02090 100%);clip-path:polygon(0 0,100% 0,100% 100%,0 78%)"></div>
<div class="a" style="left:0;top:12px;width:9px;height:13px;border-radius:45%;background:radial-gradient(circle,#30304a 0,#30304a 30%,#f0f0f4 45%,#e0e0ea 70%,transparent 75%)"></div>
<div class="t" style="left:35px;top:21px;font-size:13px;font-weight:bold;color:#8e3c8e;letter-spacing:-.5px">Cred</div>
<div class="t" style="left:59px;top:10px;font-size:13px;font-weight:bold;color:#4a3c9c">4</div>
<div class="t" style="left:67px;top:10px;font-size:13px;font-weight:bold;color:#5ab2da;letter-spacing:-.6px">Teach</div>
<div class="a" style="left:75px;top:26px;width:24px;height:2px;background:#b8bcc8"></div>
<div class="a" style="left:117px;top:11px;width:26px;height:18px;background:#2444aa"></div>
<div class="a" style="left:123px;top:14px;width:14px;height:12px;border-radius:50%;border:1px dotted #e8d040"></div>
<div class="a" style="left:146px;top:15px;width:37px;height:3px;background:#8a90a6"></div>
<div class="a" style="left:146px;top:22px;width:34px;height:3px;background:#8a90a6"></div>
<div class="a" style="left:24px;top:35px;width:159px;height:2px;background:#a6a8b4"></div>
<div class="t" style="left:57px;top:42px;font-size:13px;font-weight:bold;color:#0d0d0d;font-family:'Liberation Serif',serif;transform:scaleY(.8);transform-origin:0 0;-webkit-text-stroke:.4px #000">СВІДОЦТВО</div>
<div class="cll" style="left:77px;top:58px;width:40px"></div>
<div class="cdl" style="left:87px;top:66px;width:19px"></div>
<div class="a" style="left:55px;top:86px;width:100px;height:1px;background:#5a5a62"></div>
<div class="cll" style="left:62px;top:91px;width:83px"></div>
<div class="cdl" style="left:65px;top:97px;width:75px"></div>
<div class="cll" style="left:44px;top:106px;width:119px"></div>
<div class="cdl" style="left:42px;top:111px;width:122px"></div>
<div class="cll" style="left:88px;top:119px;width:20px"></div>
<div class="cll" style="left:0px;top:117px;width:21px"></div>
<div class="cll" style="left:0px;top:120px;width:18px"></div>
<div class="cll" style="left:0px;top:123px;width:21px"></div>
<div class="cll" style="left:0px;top:126px;width:16px"></div>
<div class="cll" style="left:42px;top:138px;width:46px"></div>
<div class="cll" style="left:44px;top:143px;width:42px"></div>
<div class="cll" style="left:153px;top:141px;width:30px"></div>
<div class="t" style="left:10px;top:70px;width:170px;text-align:center;font-size:11.5px;font-style:italic;color:#6e6e72;font-family:'Liberation Serif',serif;letter-spacing:.4px">Аніпченко Анні</div>
<div class="a" style="left:1px;top:132px;width:13px;height:16px;background:repeating-linear-gradient(90deg,#3a3a3a 0 2px,#bbb 2px 3px)"></div>
<div class="a" style="left:108px;top:122px;width:45px;height:36px;border-radius:50%;border:2px solid #a0a6cc"></div>
<div class="a" style="left:124px;top:134px;width:10px;height:14px;border:1px solid #8a90b8"></div>
</div>
</div>
<div class="a" style="left:850px;top:51px;width:192px;height:192px;border-radius:10px;background:#eff2f9;overflow:hidden">
<div class="a" style="left:10px;top:11px;width:14px;height:14px;background:#e04a3f;border-radius:2px"></div>
<div class="t" style="left:11px;top:15px;font-size:6px;font-weight:bold;color:#fde;letter-spacing:-.3px">PDF</div>
<div class="t" style="left:36px;top:12px;font-size:12.2px;color:#1f1f1f;-webkit-text-stroke:.2px #1f1f1f">250003 Асмоловська...</div>
<div class="a" style="left:175px;top:12px;width:4px;height:12px;background:radial-gradient(circle,#1f1f1f 1.2px,transparent 1.7px) 0 0/4px 4px"></div>
<div class="a" style="left:5px;top:36px;width:180px;height:156px;background:#fff"></div>
<div class="a" style="left:13px;top:45px;width:165px;height:141px;border:2px solid #c188dc;border-bottom:none;overflow:hidden;filter:blur(.35px)">
<div class="t" style="left:3px;top:16px;font-size:12.5px;font-weight:bold;color:#6a3a8c;letter-spacing:-.6px">Cred</div>
<div class="t" style="left:26px;top:6px;font-size:12.3px;font-weight:bold;color:#46a6c8;letter-spacing:-.7px">4Teach</div>
<div class="a" style="left:38px;top:21px;width:26px;height:2px;background:#dcd8e4"></div>
<div class="a" style="left:67px;top:2px;width:30px;height:30px;background:#1e2f6a"></div>
<div class="a" style="left:74px;top:8px;width:16px;height:18px;border-radius:50%;background:radial-gradient(circle,#f0ece4 0,#d8cca8 45%,#a89870 60%,#1e2f6a 78%)"></div>
<div class="a" style="left:98px;top:11px;width:19px;height:12px;background:#283e9c"></div>
<div class="a" style="left:119px;top:13px;width:36px;height:2px;background:#c0c4d4"></div>
<div class="a" style="left:119px;top:18px;width:40px;height:2px;background:#c0c4d4"></div>
<div class="ll" style="left:27px;top:39px;width:120px"></div>
<div class="ll" style="left:63px;top:47px;width:48px"></div>
<div class="ll" style="left:76px;top:55px;width:20px"></div>
<div class="dl" style="left:8px;top:63px;width:150px"></div>
<div class="dl" style="left:62px;top:68px;width:43px"></div>
<div class="ll" style="left:6px;top:73px;width:35px"></div>
<div class="ll" style="left:6px;top:77px;width:28px"></div>
<div class="ll" style="left:6px;top:80px;width:50px"></div>
<div class="dl" style="left:20px;top:84px;width:124px"></div>
<div class="dl" style="left:62px;top:89px;width:43px"></div>
<div class="ll" style="left:6px;top:93px;width:78px"></div>
<div class="ll" style="left:6px;top:97px;width:68px"></div>
<div class="ll" style="left:6px;top:101px;width:122px"></div>
<div class="ll" style="left:6px;top:105px;width:152px"></div>
<div class="ll" style="left:6px;top:109px;width:152px"></div>
<div class="ll" style="left:6px;top:113px;width:152px"></div>
<div class="ll" style="left:6px;top:117px;width:72px"></div>
<div class="dl" style="left:22px;top:121px;width:122px"></div>
<div class="ll" style="left:11px;top:125px;width:100px"></div>
<div class="ll" style="left:6px;top:130px;width:152px"></div>
<div class="ll" style="left:6px;top:134px;width:24px"></div>
<div class="dl" style="left:11px;top:138px;width:145px"></div>
</div>
</div>
<div class="a" style="left:1058px;top:51px;width:192px;height:192px;border-radius:10px;background:#eff2f9;overflow:hidden">
<div class="a" style="left:10px;top:11px;width:14px;height:14px;background:#e04a3f;border-radius:2px"></div>
<div class="t" style="left:11px;top:15px;font-size:6px;font-weight:bold;color:#fde;letter-spacing:-.3px">PDF</div>
<div class="t" style="left:36px;top:12px;font-size:12.2px;color:#1f1f1f;-webkit-text-stroke:.2px #1f1f1f">250003 Асмоловська...</div>
<div class="a" style="left:175px;top:12px;width:4px;height:12px;background:radial-gradient(circle,#1f1f1f 1.2px,transparent 1.7px) 0 0/4px 4px"></div>
<div class="a" style="left:4px;top:36px;width:183px;height:150px;background:#c8c8ca;overflow:hidden;filter:blur(.3px)">
<div class="a" style="left:0;top:0;width:183px;height:10px;background:linear-gradient(180deg,#f2eef2,#dcdcde)"></div>
<div class="a" style="left:19px;top:0;width:26px;height:9px;background:#c01a9c;clip-path:polygon(0 0,78% 0,100% 100%,22% 100%)"></div>
<div class="a" style="left:10px;top:2px;width:14px;height:7px;background:#e088e0;opacity:.8"></div>
<div class="a" style="left:0;top:3px;width:14px;height:38px;background:linear-gradient(180deg,#b01890 0,#5a2480 25%,#2a2a6a 50%,#7a2a8a 75%,#b02090 100%);clip-path:polygon(0 0,100% 0,100% 100%,0 78%)"></div>
<div class="a" style="left:0;top:12px;width:9px;height:13px;border-radius:45%;background:radial-gradient(circle,#30304a 0,#30304a 30%,#f0f0f4 45%,#e0e0ea 70%,transparent 75%)"></div>
<div class="t" style="left:35px;top:21px;font-size:13px;font-weight:bold;color:#8e3c8e;letter-spacing:-.5px">Cred</div>
<div class="t" style="left:59px;top:10px;font-size:13px;font-weight:bold;color:#4a3c9c">4</div>
<div class="t" style="left:67px;top:10px;font-size:13px;font-weight:bold;color:#5ab2da;letter-spacing:-.6px">Teach</div>
<div class="a" style="left:75px;top:26px;width:24px;height:2px;background:#b8bcc8"></div>
<div class="a" style="left:117px;top:11px;width:26px;height:18px;background:#2444aa"></div>
<div class="a" style="left:123px;top:14px;width:14px;height:12px;border-radius:50%;border:1px dotted #e8d040"></div>
<div class="a" style="left:146px;top:15px;width:37px;height:3px;background:#8a90a6"></div>
<div class="a" style="left:146px;top:22px;width:34px;height:3px;background:#8a90a6"></div>
<div class="a" style="left:24px;top:35px;width:159px;height:2px;background:#a6a8b4"></div>
<div class="t" style="left:57px;top:42px;font-size:13px;font-weight:bold;color:#0d0d0d;font-family:'Liberation Serif',serif;transform:scaleY(.8);transform-origin:0 0;-webkit-text-stroke:.4px #000">СВІДОЦТВО</div>
<div class="cll" style="left:77px;top:58px;width:40px"></div>
<div class="cdl" style="left:87px;top:66px;width:19px"></div>
<div class="a" style="left:55px;top:86px;width:100px;height:1px;background:#5a5a62"></div>
<div class="cll" style="left:62px;top:91px;width:83px"></div>
<div class="cdl" style="left:65px;top:97px;width:75px"></div>
<div class="cll" style="left:44px;top:106px;width:119px"></div>
<div class="cdl" style="left:42px;top:111px;width:122px"></div>
<div class="cll" style="left:88px;top:119px;width:20px"></div>
<div class="cll" style="left:0px;top:117px;width:21px"></div>
<div class="cll" style="left:0px;top:120px;width:18px"></div>
<div class="cll" style="left:0px;top:123px;width:21px"></div>
<div class="cll" style="left:0px;top:126px;width:16px"></div>
<div class="cll" style="left:42px;top:138px;width:46px"></div>
<div class="cll" style="left:44px;top:143px;width:42px"></div>
<div class="cll" style="left:153px;top:141px;width:30px"></div>
<div class="t" style="left:10px;top:70px;width:170px;text-align:center;font-size:11.5px;font-style:italic;color:#6e6e72;font-family:'Liberation Serif',serif;letter-spacing:.4px">Асмоловській Олені</div>
<div class="a" style="left:1px;top:132px;width:13px;height:16px;background:repeating-linear-gradient(90deg,#3a3a3a 0 2px,#bbb 2px 3px)"></div>
<div class="a" style="left:108px;top:122px;width:45px;height:36px;border-radius:50%;border:2px solid #a0a6cc"></div>
<div class="a" style="left:124px;top:134px;width:10px;height:14px;border:1px solid #8a90b8"></div>
</div>
</div>
<div class="a" style="left:18px;top:259px;width:192px;height:192px;border-radius:10px;background:#eff2f9;overflow:hidden">
<div class="a" style="left:10px;top:11px;width:14px;height:14px;background:#e04a3f;border-radius:2px"></div>
<div class="t" style="left:11px;top:15px;font-size:6px;font-weight:bold;color:#fde;letter-spacing:-.3px">PDF</div>
<div class="t" style="left:36px;top:12px;font-size:12.2px;color:#1f1f1f;-webkit-text-stroke:.2px #1f1f1f">250004 Зарицька...</div>
<div class="a" style="left:175px;top:12px;width:4px;height:12px;background:radial-gradient(circle,#1f1f1f 1.2px,transparent 1.7px) 0 0/4px 4px"></div>
<div class="a" style="left:5px;top:36px;width:180px;height:156px;background:#fff"></div>
<div class="a" style="left:13px;top:45px;width:165px;height:141px;border:2px solid #c188dc;border-bottom:none;overflow:hidden;filter:blur(.35px)">
<div class="t" style="left:3px;top:16px;font-size:12.5px;font-weight:bold;color:#6a3a8c;letter-spacing:-.6px">Cred</div>
<div class="t" style="left:26px;top:6px;font-size:12.3px;font-weight:bold;color:#46a6c8;letter-spacing:-.7px">4Teach</div>
<div class="a" style="left:38px;top:21px;width:26px;height:2px;background:#dcd8e4"></div>
<div class="a" style="left:67px;top:2px;width:30px;height:30px;background:#1e2f6a"></div>
<div class="a" style="left:74px;top:8px;width:16px;height:18px;border-radius:50%;background:radial-gradient(circle,#f0ece4 0,#d8cca8 45%,#a89870 60%,#1e2f6a 78%)"></div>
<div class="a" style="left:98px;top:11px;width:19px;height:12px;background:#283e9c"></div>
<div class="a" style="left:119px;top:13px;width:36px;height:2px;background:#c0c4d4"></div>
<div class="a" style="left:119px;top:18px;width:40px;height:2px;background:#c0c4d4"></div>
<div class="ll" style="left:27px;top:39px;width:120px"></div>
<div class="ll" style="left:63px;top:47px;width:48px"></div>
<div class="ll" style="left:76px;top:55px;width:20px"></div>
<div class="dl" style="left:8px;top:63px;width:150px"></div>
<div class="dl" style="left:62px;top:68px;width:43px"></div>
<div class="ll" style="left:6px;top:73px;width:35px"></div>
<div class="ll" style="left:6px;top:77px;width:28px"></div>
<div class="ll" style="left:6px;top:80px;width:50px"></div>
<div class="dl" style="left:20px;top:84px;width:124px"></div>
<div class="dl" style="left:62px;top:89px;width:43px"></div>
<div class="ll" style="left:6px;top:93px;width:78px"></div>
<div class="ll" style="left:6px;top:97px;width:68px"></div>
<div class="ll" style="left:6px;top:101px;width:122px"></div>
<div class="ll" style="left:6px;top:105px;width:152px"></div>
<div class="ll" style="left:6px;top:109px;width:152px"></div>
<div class="ll" style="left:6px;top:113px;width:152px"></div>
<div class="ll" style="left:6px;top:117px;width:72px"></div>
<div class="dl" style="left:22px;top:121px;width:122px"></div>
<div class="ll" style="left:11px;top:125px;width:100px"></div>
<div class="ll" style="left:6px;top:130px;width:152px"></div>
<div class="ll" style="left:6px;top:134px;width:24px"></div>
<div class="dl" style="left:11px;top:138px;width:145px"></div>
</div>
</div>
<div class="a" style="left:226px;top:259px;width:192px;height:192px;border-radius:10px;background:#eff2f9;overflow:hidden">
<div class="a" style="left:10px;top:11px;width:14px;height:14px;background:#e04a3f;border-radius:2px"></div>
<div class="t" style="left:11px;top:15px;font-size:6px;font-weight:bold;color:#fde;letter-spacing:-.3px">PDF</div>
<div class="t" style="left:36px;top:12px;font-size:12.2px;color:#1f1f1f;-webkit-text-stroke:.2px #1f1f1f">250004 Зарицька...</div>
<div class="a" style="left:175px;top:12px;width:4px;height:12px;background:radial-gradient(circle,#1f1f1f 1.2px,transparent 1.7px) 0 0/4px 4px"></div>
<div class="a" style="left:4px;top:36px;width:183px;height:150px;background:#c8c8ca;overflow:hidden;filter:blur(.3px)">
<div class="a" style="left:0;top:0;width:183px;height:10px;background:linear-gradient(180deg,#f2eef2,#dcdcde)"></div>
<div class="a" style="left:19px;top:0;width:26px;height:9px;background:#c01a9c;clip-path:polygon(0 0,78% 0,100% 100%,22% 100%)"></div>
<div class="a" style="left:10px;top:2px;width:14px;height:7px;background:#e088e0;opacity:.8"></div>
<div class="a" style="left:0;top:3px;width:14px;height:38px;background:linear-gradient(180deg,#b01890 0,#5a2480 25%,#2a2a6a 50%,#7a2a8a 75%,#b02090 100%);clip-path:polygon(0 0,100% 0,100% 100%,0 78%)"></div>
<div class="a" style="left:0;top:12px;width:9px;height:13px;border-radius:45%;background:radial-gradient(circle,#30304a 0,#30304a 30%,#f0f0f4 45%,#e0e0ea 70%,transparent 75%)"></div>
<div class="t" style="left:35px;top:21px;font-size:13px;font-weight:bold;color:#8e3c8e;letter-spacing:-.5px">Cred</div>
<div class="t" style="left:59px;top:10px;font-size:13px;font-weight:bold;color:#4a3c9c">4</div>
<div class="t" style="left:67px;top:10px;font-size:13px;font-weight:bold;color:#5ab2da;letter-spacing:-.6px">Teach</div>
<div class="a" style="left:75px;top:26px;width:24px;height:2px;background:#b8bcc8"></div>
<div class="a" style="left:117px;top:11px;width:26px;height:18px;background:#2444aa"></div>
<div class="a" style="left:123px;top:14px;width:14px;height:12px;border-radius:50%;border:1px dotted #e8d040"></div>
<div class="a" style="left:146px;top:15px;width:37px;height:3px;background:#8a90a6"></div>
<div class="a" style="left:146px;top:22px;width:34px;height:3px;background:#8a90a6"></div>
<div class="a" style="left:24px;top:35px;width:159px;height:2px;background:#a6a8b4"></div>
<div class="t" style="left:57px;top:42px;font-size:13px;font-weight:bold;color:#0d0d0d;font-family:'Liberation Serif',serif;transform:scaleY(.8);transform-origin:0 0;-webkit-text-stroke:.4px #000">СВІДОЦТВО</div>
<div class="cll" style="left:77px;top:58px;width:40px"></div>
<div class="cdl" style="left:87px;top:66px;width:19px"></div>
<div class="a" style="left:55px;top:86px;width:100px;height:1px;background:#5a5a62"></div>
<div class="cll" style="left:62px;top:91px;width:83px"></div>
<div class="cdl" style="left:65px;top:97px;width:75px"></div>
<div class="cll" style="left:44px;top:106px;width:119px"></div>
<div class="cdl" style="left:42px;top:111px;width:122px"></div>
<div class="cll" style="left:88px;top:119px;width:20px"></div>
<div class="cll" style="left:0px;top:117px;width:21px"></div>
<div class="cll" style="left:0px;top:120px;width:18px"></div>
<div class="cll" style="left:0px;top:123px;width:21px"></div>
<div class="cll" style="left:0px;top:126px;width:16px"></div>
<div class="cll" style="left:42px;top:138px;width:46px"></div>
<div class="cll" style="left:44px;top:143px;width:42px"></div>
<div class="cll" style="left:153px;top:141px;width:30px"></div>
<div class="t" style="left:10px;top:70px;width:170px;text-align:center;font-size:11.5px;font-style:italic;color:#6e6e72;font-family:'Liberation Serif',serif;letter-spacing:.4px">Зарицькій Аллі</div>
<div class="a" style="left:1px;top:132px;width:13px;height:16px;background:repeating-linear-gradient(90deg,#3a3a3a 0 2px,#bbb 2px 3px)"></div>
<div class="a" style="left:108px;top:122px;width:45px;height:36px;border-radius:50%;border:2px solid #a0a6cc"></div>
<div class="a" style="left:124px;top:134px;width:10px;height:14px;border:1px solid #8a90b8"></div>
</div>
</div>
<div class="a" style="left:434px;top:259px;width:192px;height:192px;border-radius:10px;background:#eff2f9;overflow:hidden">
<div class="a" style="left:10px;top:11px;width:14px;height:14px;background:#e04a3f;border-radius:2px"></div>
<div class="t" style="left:11px;top:15px;font-size:6px;font-weight:bold;color:#fde;letter-spacing:-.3px">PDF</div>
<div class="t" style="left:36px;top:12px;font-size:12.2px;color:#1f1f1f;-webkit-text-stroke:.2px #1f1f1f">250005 Кобиліна...</div>
<div class="a" style="left:175px;top:12px;width:4px;height:12px;background:radial-gradient(circle,#1f1f1f 1.2px,transparent 1.7px) 0 0/4px 4px"></div>
<div class="a" style="left:5px;top:36px;width:180px;height:156px;background:#fff"></div>
<div class="a" style="left:13px;top:45px;width:165px;height:141px;border:2px solid #c188dc;border-bottom:none;overflow:hidden;filter:blur(.35px)">
<div class="t" style="left:3px;top:16px;font-size:12.5px;font-weight:bold;color:#6a3a8c;letter-spacing:-.6px">Cred</div>
<div class="t" style="left:26px;top:6px;font-size:12.3px;font-weight:bold;color:#46a6c8;letter-spacing:-.7px">4Teach</div>
<div class="a" style="left:38px;top:21px;width:26px;height:2px;background:#dcd8e4"></div>
<div class="a" style="left:67px;top:2px;width:30px;height:30px;background:#1e2f6a"></div>
<div class="a" style="left:74px;top:8px;width:16px;height:18px;border-radius:50%;background:radial-gradient(circle,#f0ece4 0,#d8cca8 45%,#a89870 60%,#1e2f6a 78%)"></div>
<div class="a" style="left:98px;top:11px;width:19px;height:12px;background:#283e9c"></div>
<div class="a" style="left:119px;top:13px;width:36px;height:2px;background:#c0c4d4"></div>
<div class="a" style="left:119px;top:18px;width:40px;height:2px;background:#c0c4d4"></div>
<div class="ll" style="left:27px;top:39px;width:120px"></div>
<div class="ll" style="left:63px;top:47px;width:48px"></div>
<div class="ll" style="left:76px;top:55px;width:20px"></div>
<div class="dl" style="left:8px;top:63px;width:150px"></div>
<div class="dl" style="left:62px;top:68px;width:43px"></div>
<div class="ll" style="left:6px;top:73px;width:35px"></div>
<div class="ll" style="left:6px;top:77px;width:28px"></div>
<div class="ll" style="left:6px;top:80px;width:50px"></div>
<div class="dl" style="left:20px;top:84px;width:124px"></div>
<div class="dl" style="left:62px;top:89px;width:43px"></div>
<div class="ll" style="left:6px;top:93px;width:78px"></div>
<div class="ll" style="left:6px;top:97px;width:68px"></div>
<div class="ll" style="left:6px;top:101px;width:122px"></div>
<div class="ll" style="left:6px;top:105px;width:152px"></div>
<div class="ll" style="left:6px;top:109px;width:152px"></div>
<div class="ll" style="left:6px;top:113px;width:152px"></div>
<div class="ll" style="left:6px;top:117px;width:72px"></div>
<div class="dl" style="left:22px;top:121px;width:122px"></div>
<div class="ll" style="left:11px;top:125px;width:100px"></div>
<div class="ll" style="left:6px;top:130px;width:152px"></div>
<div class="ll" style="left:6px;top:134px;width:24px"></div>
<div class="dl" style="left:11px;top:138px;width:145px"></div>
</div>
</div>
<div class="a" style="left:642px;top:259px;width:192px;height:192px;border-radius:10px;background:#eff2f9;overflow:hidden">
<div class="a" style="left:10px;top:11px;width:14px;height:14px;background:#e04a3f;border-radius:2px"></div>
<div class="t" style="left:11px;top:15px;font-size:6px;font-weight:bold;color:#fde;letter-spacing:-.3px">PDF</div>
<div class="t" style="left:36px;top:12px;font-size:12.2px;color:#1f1f1f;-webkit-text-stroke:.2px #1f1f1f">250005 Кобиліна...</div>
<div class="a" style="left:175px;top:12px;width:4px;height:12px;background:radial-gradient(circle,#1f1f1f 1.2px,transparent 1.7px) 0 0/4px 4px"></div>
<div class="a" style="left:4px;top:36px;width:183px;height:150px;background:#c8c8ca;overflow:hidden;filter:blur(.3px)">
<div class="a" style="left:0;top:0;width:183px;height:10px;background:linear-gradient(180deg,#f2eef2,#dcdcde)"></div>
<div class="a" style="left:19px;top:0;width:26px;height:9px;background:#c01a9c;clip-path:polygon(0 0,78% 0,100% 100%,22% 100%)"></div>
<div class="a" style="left:10px;top:2px;width:14px;height:7px;background:#e088e0;opacity:.8"></div>
<div class="a" style="left:0;top:3px;width:14px;height:38px;background:linear-gradient(180deg,#b01890 0,#5a2480 25%,#2a2a6a 50%,#7a2a8a 75%,#b02090 100%);clip-path:polygon(0 0,100% 0,100% 100%,0 78%)"></div>
<div class="a" style="left:0;top:12px;width:9px;height:13px;border-radius:45%;background:radial-gradient(circle,#30304a 0,#30304a 30%,#f0f0f4 45%,#e0e0ea 70%,transparent 75%)"></div>
<div class="t" style="left:35px;top:21px;font-size:13px;font-weight:bold;color:#8e3c8e;letter-spacing:-.5px">Cred</div>
<div class="t" style="left:59px;top:10px;font-size:13px;font-weight:bold;color:#4a3c9c">4</div>
<div class="t" style="left:67px;top:10px;font-size:13px;font-weight:bold;color:#5ab2da;letter-spacing:-.6px">Teach</div>
<div class="a" style="left:75px;top:26px;width:24px;height:2px;background:#b8bcc8"></div>
<div class="a" style="left:117px;top:11px;width:26px;height:18px;background:#2444aa"></div>
<div class="a" style="left:123px;top:14px;width:14px;height:12px;border-radius:50%;border:1px dotted #e8d040"></div>
<div class="a" style="left:146px;top:15px;width:37px;height:3px;background:#8a90a6"></div>
<div class="a" style="left:146px;top:22px;width:34px;height:3px;background:#8a90a6"></div>
<div class="a" style="left:24px;top:35px;width:159px;height:2px;background:#a6a8b4"></div>
<div class="t" style="left:57px;top:42px;font-size:13px;font-weight:bold;color:#0d0d0d;font-family:'Liberation Serif',serif;transform:scaleY(.8);transform-origin:0 0;-webkit-text-stroke:.4px #000">СВІДОЦТВО</div>
<div class="cll" style="left:77px;top:58px;width:40px"></div>
<div class="cdl" style="left:87px;top:66px;width:19px"></div>
<div class="a" style="left:55px;top:86px;width:100px;height:1px;background:#5a5a62"></div>
<div class="cll" style="left:62px;top:91px;width:83px"></div>
<div class="cdl" style="left:65px;top:97px;width:75px"></div>
<div class="cll" style="left:44px;top:106px;width:119px"></div>
<div class="cdl" style="left:42px;top:111px;width:122px"></div>
<div class="cll" style="left:88px;top:119px;width:20px"></div>
<div class="cll" style="left:0px;top:117px;width:21px"></div>
<div class="cll" style="left:0px;top:120px;width:18px"></div>
<div class="cll" style="left:0px;top:123px;width:21px"></div>
<div class="cll" style="left:0px;top:126px;width:16px"></div>
<div class="cll" style="left:42px;top:138px;width:46px"></div>
<div class="cll" style="left:44px;top:143px;width:42px"></div>
<div class="cll" style="left:153px;top:141px;width:30px"></div>
<div class="t" style="left:10px;top:70px;width:170px;text-align:center;font-size:11.5px;font-style:italic;color:#6e6e72;font-family:'Liberation Serif',serif;letter-spacing:.4px">Кобиліній Любові</div>
<div class="a" style="left:1px;top:132px;width:13px;height:16px;background:repeating-linear-gradient(90deg,#3a3a3a 0 2px,#bbb 2px 3px)"></div>
<div class="a" style="left:108px;top:122px;width:45px;height:36px;border-radius:50%;border:2px solid #a0a6cc"></div>
<div class="a" style="left:124px;top:134px;width:10px;height:14px;border:1px solid #8a90b8"></div>
</div>
</div>
<div class="a" style="left:850px;top:259px;width:192px;height:192px;border-radius:10px;background:#eff2f9;overflow:hidden">
<div class="a" style="left:10px;top:11px;width:14px;height:14px;background:#e04a3f;border-radius:2px"></div>
<div class="t" style="left:11px;top:15px;font-size:6px;font-weight:bold;color:#fde;letter-spacing:-.3px">PDF</div>
<div class="t" style="left:36px;top:12px;font-size:12.2px;color:#1f1f1f;-webkit-text-stroke:.2px #1f1f1f">250006 Литвинова...</div>
<div class="a" style="left:175px;top:12px;width:4px;height:12px;background:radial-gradient(circle,#1f1f1f 1.2px,transparent 1.7px) 0 0/4px 4px"></div>
<div class="a" style="left:5px;top:36px;width:180px;height:156px;background:#fff"></div>
<div class="a" style="left:13px;top:45px;width:165px;height:141px;border:2px solid #c188dc;border-bottom:none;overflow:hidden;filter:blur(.35px)">
<div class="t" style="left:3px;top:16px;font-size:12.5px;font-weight:bold;color:#6a3a8c;letter-spacing:-.6px">Cred</div>
<div class="t" style="left:26px;top:6px;font-size:12.3px;font-weight:bold;color:#46a6c8;letter-spacing:-.7px">4Teach</div>
<div class="a" style="left:38px;top:21px;width:26px;height:2px;background:#dcd8e4"></div>
<div class="a" style="left:67px;top:2px;width:30px;height:30px;background:#1e2f6a"></div>
<div class="a" style="left:74px;top:8px;width:16px;height:18px;border-radius:50%;background:radial-gradient(circle,#f0ece4 0,#d8cca8 45%,#a89870 60%,#1e2f6a 78%)"></div>
<div class="a" style="left:98px;top:11px;width:19px;height:12px;background:#283e9c"></div>
<div class="a" style="left:119px;top:13px;width:36px;height:2px;background:#c0c4d4"></div>
<div class="a" style="left:119px;top:18px;width:40px;height:2px;background:#c0c4d4"></div>
<div class="ll" style="left:27px;top:39px;width:120px"></div>
<div class="ll" style="left:63px;top:47px;width:48px"></div>
<div class="ll" style="left:76px;top:55px;width:20px"></div>
<div class="dl" style="left:8px;top:63px;width:150px"></div>
<div class="dl" style="left:62px;top:68px;width:43px"></div>
<div class="ll" style="left:6px;top:73px;width:35px"></div>
<div class="ll" style="left:6px;top:77px;width:28px"></div>
<div class="ll" style="left:6px;top:80px;width:50px"></div>
<div class="dl" style="left:20px;top:84px;width:124px"></div>
<div class="dl" style="left:62px;top:89px;width:43px"></div>
<div class="ll" style="left:6px;top:93px;width:78px"></div>
<div class="ll" style="left:6px;top:97px;width:68px"></div>
<div class="ll" style="left:6px;top:101px;width:122px"></div>
<div class="ll" style="left:6px;top:105px;width:152px"></div>
<div class="ll" style="left:6px;top:109px;width:152px"></div>
<div class="ll" style="left:6px;top:113px;width:152px"></div>
<div class="ll" style="left:6px;top:117px;width:72px"></div>
<div class="dl" style="left:22px;top:121px;width:122px"></div>
<div class="ll" style="left:11px;top:125px;width:100px"></div>
<div class="ll" style="left:6px;top:130px;width:152px"></div>
<div class="ll" style="left:6px;top:134px;width:24px"></div>
<div class="dl" style="left:11px;top:138px;width:145px"></div>
</div>
</div>
<div class="a" style="left:1058px;top:259px;width:192px;height:192px;border-radius:10px;background:#eff2f9;overflow:hidden">
<div class="a" style="left:10px;top:11px;width:14px;height:14px;background:#e04a3f;border-radius:2px"></div>
<div class="t" style="left:11px;top:15px;font-size:6px;font-weight:bold;color:#fde;letter-spacing:-.3px">PDF</div>
<div class="t" style="left:36px;top:12px;font-size:12.2px;color:#1f1f1f;-webkit-text-stroke:.2px #1f1f1f">250006 Литвинова...</div>
<div class="a" style="left:175px;top:12px;width:4px;height:12px;background:radial-gradient(circle,#1f1f1f 1.2px,transparent 1.7px) 0 0/4px 4px"></div>
<div class="a" style="left:4px;top:36px;width:183px;height:150px;background:#c8c8ca;overflow:hidden;filter:blur(.3px)">
<div class="a" style="left:0;top:0;width:183px;height:10px;background:linear-gradient(180deg,#f2eef2,#dcdcde)"></div>
<div class="a" style="left:19px;top:0;width:26px;height:9px;background:#c01a9c;clip-path:polygon(0 0,78% 0,100% 100%,22% 100%)"></div>
<div class="a" style="left:10px;top:2px;width:14px;height:7px;background:#e088e0;opacity:.8"></div>
<div class="a" style="left:0;top:3px;width:14px;height:38px;background:linear-gradient(180deg,#b01890 0,#5a2480 25%,#2a2a6a 50%,#7a2a8a 75%,#b02090 100%);clip-path:polygon(0 0,100% 0,100% 100%,0 78%)"></div>
<div class="a" style="left:0;top:12px;width:9px;height:13px;border-radius:45%;background:radial-gradient(circle,#30304a 0,#30304a 30%,#f0f0f4 45%,#e0e0ea 70%,transparent 75%)"></div>
<div class="t" style="left:35px;top:21px;font-size:13px;font-weight:bold;color:#8e3c8e;letter-spacing:-.5px">Cred</div>
<div class="t" style="left:59px;top:10px;font-size:13px;font-weight:bold;color:#4a3c9c">4</div>
<div class="t" style="left:67px;top:10px;font-size:13px;font-weight:bold;color:#5ab2da;letter-spacing:-.6px">Teach</div>
<div class="a" style="left:75px;top:26px;width:24px;height:2px;background:#b8bcc8"></div>
<div class="a" style="left:117px;top:11px;width:26px;height:18px;background:#2444aa"></div>
<div class="a" style="left:123px;top:14px;width:14px;height:12px;border-radius:50%;border:1px dotted #e8d040"></div>
<div class="a" style="left:146px;top:15px;width:37px;height:3px;background:#8a90a6"></div>
<div class="a" style="left:146px;top:22px;width:34px;height:3px;background:#8a90a6"></div>
<div class="a" style="left:24px;top:35px;width:159px;height:2px;background:#a6a8b4"></div>
<div class="t" style="left:57px;top:42px;font-size:13px;font-weight:bold;color:#0d0d0d;font-family:'Liberation Serif',serif;transform:scaleY(.8);transform-origin:0 0;-webkit-text-stroke:.4px #000">СВІДОЦТВО</div>
<div class="cll" style="left:77px;top:58px;width:40px"></div>
<div class="cdl" style="left:87px;top:66px;width:19px"></div>
<div class="a" style="left:55px;top:86px;width:100px;height:1px;background:#5a5a62"></div>
<div class="cll" style="left:62px;top:91px;width:83px"></div>
<div class="cdl" style="left:65px;top:97px;width:75px"></div>
<div class="cll" style="left:44px;top:106px;width:119px"></div>
<div class="cdl" style="left:42px;top:111px;width:122px"></div>
<div class="cll" style="left:88px;top:119px;width:20px"></div>
<div class="cll" style="left:0px;top:117px;width:21px"></div>
<div class="cll" style="left:0px;top:120px;width:18px"></div>
<div class="cll" style="left:0px;top:123px;width:21px"></div>
<div class="cll" style="left:0px;top:126px;width:16px"></div>
<div class="cll" style="left:42px;top:138px;width:46px"></div>
<div class="cll" style="left:44px;top:143px;width:42px"></div>
<div class="cll" style="left:153px;top:141px;width:30px"></div>
<div class="t" style="left:10px;top:70px;width:170px;text-align:center;font-size:11.5px;font-style:italic;color:#6e6e72;font-family:'Liberation Serif',serif;letter-spacing:.4px">Литвиновій Наталії</div>
<div class="a" style="left:1px;top:132px;width:13px;height:16px;background:repeating-linear-gradient(90deg,#3a3a3a 0 2px,#bbb 2px 3px)"></div>
<div class="a" style="left:108px;top:122px;width:45px;height:36px;border-radius:50%;border:2px solid #a0a6cc"></div>
<div class="a" style="left:124px;top:134px;width:10px;height:14px;border:1px solid #8a90b8"></div>
</div>
</div>
<div class="a" style="left:18px;top:467px;width:192px;height:192px;border-radius:10px;background:#eff2f9;overflow:hidden">
<div class="a" style="left:10px;top:11px;width:14px;height:14px;background:#e04a3f;border-radius:2px"></div>
<div class="t" style="left:11px;top:15px;font-size:6px;font-weight:bold;color:#fde;letter-spacing:-.3px">PDF</div>
<div class="t" style="left:36px;top:12px;font-size:12.2px;color:#1f1f1f;-webkit-text-stroke:.2px #1f1f1f">250007 Одерій...</div>
<div class="a" style="left:175px;top:12px;width:4px;height:12px;background:radial-gradient(circle,#1f1f1f 1.2px,transparent 1.7px) 0 0/4px 4px"></div>
<div class="a" style="left:5px;top:36px;width:180px;height:156px;background:#fff"></div>
<div class="a" style="left:13px;top:45px;width:165px;height:141px;border:2px solid #c188dc;border-bottom:none;overflow:hidden;filter:blur(.35px)">
<div class="t" style="left:3px;top:16px;font-size:12.5px;font-weight:bold;color:#6a3a8c;letter-spacing:-.6px">Cred</div>
<div class="t" style="left:26px;top:6px;font-size:12.3px;font-weight:bold;color:#46a6c8;letter-spacing:-.7px">4Teach</div>
<div class="a" style="left:38px;top:21px;width:26px;height:2px;background:#dcd8e4"></div>
<div class="a" style="left:67px;top:2px;width:30px;height:30px;background:#1e2f6a"></div>
<div class="a" style="left:74px;top:8px;width:16px;height:18px;border-radius:50%;background:radial-gradient(circle,#f0ece4 0,#d8cca8 45%,#a89870 60%,#1e2f6a 78%)"></div>
<div class="a" style="left:98px;top:11px;width:19px;height:12px;background:#283e9c"></div>
<div class="a" style="left:119px;top:13px;width:36px;height:2px;background:#c0c4d4"></div>
<div class="a" style="left:119px;top:18px;width:40px;height:2px;background:#c0c4d4"></div>
<div class="ll" style="left:27px;top:39px;width:120px"></div>
<div class="ll" style="left:63px;top:47px;width:48px"></div>
<div class="ll" style="left:76px;top:55px;width:20px"></div>
<div class="dl" style="left:8px;top:63px;width:150px"></div>
<div class="dl" style="left:62px;top:68px;width:43px"></div>
<div class="ll" style="left:6px;top:73px;width:35px"></div>
<div class="ll" style="left:6px;top:77px;width:28px"></div>
<div class="ll" style="left:6px;top:80px;width:50px"></div>
<div class="dl" style="left:20px;top:84px;width:124px"></div>
<div class="dl" style="left:62px;top:89px;width:43px"></div>
<div class="ll" style="left:6px;top:93px;width:78px"></div>
<div class="ll" style="left:6px;top:97px;width:68px"></div>
<div class="ll" style="left:6px;top:101px;width:122px"></div>
<div class="ll" style="left:6px;top:105px;width:152px"></div>
<div class="ll" style="left:6px;top:109px;width:152px"></div>
<div class="ll" style="left:6px;top:113px;width:152px"></div>
<div class="ll" style="left:6px;top:117px;width:72px"></div>
<div class="dl" style="left:22px;top:121px;width:122px"></div>
<div class="ll" style="left:11px;top:125px;width:100px"></div>
<div class="ll" style="left:6px;top:130px;width:152px"></div>
<div class="ll" style="left:6px;top:134px;width:24px"></div>
<div class="dl" style="left:11px;top:138px;width:145px"></div>
</div>
</div>
<div class="a" style="left:226px;top:467px;width:192px;height:192px;border-radius:10px;background:#eff2f9;overflow:hidden">
<div class="a" style="left:10px;top:11px;width:14px;height:14px;background:#e04a3f;border-radius:2px"></div>
<div class="t" style="left:11px;top:15px;font-size:6px;font-weight:bold;color:#fde;letter-spacing:-.3px">PDF</div>
<div class="t" style="left:36px;top:12px;font-size:12.2px;color:#1f1f1f;-webkit-text-stroke:.2px #1f1f1f">250007 Одерій...</div>
<div class="a" style="left:175px;top:12px;width:4px;height:12px;background:radial-gradient(circle,#1f1f1f 1.2px,transparent 1.7px) 0 0/4px 4px"></div>
<div class="a" style="left:4px;top:36px;width:183px;height:150px;background:#c8c8ca;overflow:hidden;filter:blur(.3px)">
<div class="a" style="left:0;top:0;width:183px;height:10px;background:linear-gradient(180deg,#f2eef2,#dcdcde)"></div>
<div class="a" style="left:19px;top:0;width:26px;height:9px;background:#c01a9c;clip-path:polygon(0 0,78% 0,100% 100%,22% 100%)"></div>
<div class="a" style="left:10px;top:2px;width:14px;height:7px;background:#e088e0;opacity:.8"></div>
<div class="a" style="left:0;top:3px;width:14px;height:38px;background:linear-gradient(180deg,#b01890 0,#5a2480 25%,#2a2a6a 50%,#7a2a8a 75%,#b02090 100%);clip-path:polygon(0 0,100% 0,100% 100%,0 78%)"></div>
<div class="a" style="left:0;top:12px;width:9px;height:13px;border-radius:45%;background:radial-gradient(circle,#30304a 0,#30304a 30%,#f0f0f4 45%,#e0e0ea 70%,transparent 75%)"></div>
<div class="t" style="left:35px;top:21px;font-size:13px;font-weight:bold;color:#8e3c8e;letter-spacing:-.5px">Cred</div>
<div class="t" style="left:59px;top:10px;font-size:13px;font-weight:bold;color:#4a3c9c">4</div>
<div class="t" style="left:67px;top:10px;font-size:13px;font-weight:bold;color:#5ab2da;letter-spacing:-.6px">Teach</div>
<div class="a" style="left:75px;top:26px;width:24px;height:2px;background:#b8bcc8"></div>
<div class="a" style="left:117px;top:11px;width:26px;height:18px;background:#2444aa"></div>
<div class="a" style="left:123px;top:14px;width:14px;height:12px;border-radius:50%;border:1px dotted #e8d040"></div>
<div class="a" style="left:146px;top:15px;width:37px;height:3px;background:#8a90a6"></div>
<div class="a" style="left:146px;top:22px;width:34px;height:3px;background:#8a90a6"></div>
<div class="a" style="left:24px;top:35px;width:159px;height:2px;background:#a6a8b4"></div>
<div class="t" style="left:57px;top:42px;font-size:13px;font-weight:bold;color:#0d0d0d;font-family:'Liberation Serif',serif;transform:scaleY(.8);transform-origin:0 0;-webkit-text-stroke:.4px #000">СВІДОЦТВО</div>
<div class="cll" style="left:77px;top:58px;width:40px"></div>
<div class="cdl" style="left:87px;top:66px;width:19px"></div>
<div class="a" style="left:55px;top:86px;width:100px;height:1px;background:#5a5a62"></div>
<div class="cll" style="left:62px;top:91px;width:83px"></div>
<div class="cdl" style="left:65px;top:97px;width:75px"></div>
<div class="cll" style="left:44px;top:106px;width:119px"></div>
<div class="cdl" style="left:42px;top:111px;width:122px"></div>
<div class="cll" style="left:88px;top:119px;width:20px"></div>
<div class="cll" style="left:0px;top:117px;width:21px"></div>
<div class="cll" style="left:0px;top:120px;width:18px"></div>
<div class="cll" style="left:0px;top:123px;width:21px"></div>
<div class="cll" style="left:0px;top:126px;width:16px"></div>
<div class="cll" style="left:42px;top:138px;width:46px"></div>
<div class="cll" style="left:44px;top:143px;width:42px"></div>
<div class="cll" style="left:153px;top:141px;width:30px"></div>
<div class="t" style="left:10px;top:70px;width:170px;text-align:center;font-size:11.5px;font-style:italic;color:#6e6e72;font-family:'Liberation Serif',serif;letter-spacing:.4px">Одерій Тетяні</div>
<div class="a" style="left:1px;top:132px;width:13px;height:16px;background:repeating-linear-gradient(90deg,#3a3a3a 0 2px,#bbb 2px 3px)"></div>
<div class="a" style="left:108px;top:122px;width:45px;height:36px;border-radius:50%;border:2px solid #a0a6cc"></div>
<div class="a" style="left:124px;top:134px;width:10px;height:14px;border:1px solid #8a90b8"></div>
</div>
</div>
<div class="a" style="left:434px;top:467px;width:192px;height:192px;border-radius:10px;background:#eff2f9;overflow:hidden">
<div class="a" style="left:10px;top:11px;width:14px;height:14px;background:#e04a3f;border-radius:2px"></div>
<div class="t" style="left:11px;top:15px;font-size:6px;font-weight:bold;color:#fde;letter-spacing:-.3px">PDF</div>
<div class="t" style="left:36px;top:12px;font-size:12.2px;color:#1f1f1f;-webkit-text-stroke:.2px #1f1f1f">250008 Онищенко...</div>
<div class="a" style="left:175px;top:12px;width:4px;height:12px;background:radial-gradient(circle,#1f1f1f 1.2px,transparent 1.7px) 0 0/4px 4px"></div>
<div class="a" style="left:5px;top:36px;width:180px;height:156px;background:#fff"></div>
<div class="a" style="left:13px;top:45px;width:165px;height:141px;border:2px solid #c188dc;border-bottom:none;overflow:hidden;filter:blur(.35px)">
<div class="t" style="left:3px;top:16px;font-size:12.5px;font-weight:bold;color:#6a3a8c;letter-spacing:-.6px">Cred</div>
<div class="t" style="left:26px;top:6px;font-size:12.3px;font-weight:bold;color:#46a6c8;letter-spacing:-.7px">4Teach</div>
<div class="a" style="left:38px;top:21px;width:26px;height:2px;background:#dcd8e4"></div>
<div class="a" style="left:67px;top:2px;width:30px;height:30px;background:#1e2f6a"></div>
<div class="a" style="left:74px;top:8px;width:16px;height:18px;border-radius:50%;background:radial-gradient(circle,#f0ece4 0,#d8cca8 45%,#a89870 60%,#1e2f6a 78%)"></div>
<div class="a" style="left:98px;top:11px;width:19px;height:12px;background:#283e9c"></div>
<div class="a" style="left:119px;top:13px;width:36px;height:2px;background:#c0c4d4"></div>
<div class="a" style="left:119px;top:18px;width:40px;height:2px;background:#c0c4d4"></div>
<div class="ll" style="left:27px;top:39px;width:120px"></div>
<div class="ll" style="left:63px;top:47px;width:48px"></div>
<div class="ll" style="left:76px;top:55px;width:20px"></div>
<div class="dl" style="left:8px;top:63px;width:150px"></div>
<div class="dl" style="left:62px;top:68px;width:43px"></div>
<div class="ll" style="left:6px;top:73px;width:35px"></div>
<div class="ll" style="left:6px;top:77px;width:28px"></div>
<div class="ll" style="left:6px;top:80px;width:50px"></div>
<div class="dl" style="left:20px;top:84px;width:124px"></div>
<div class="dl" style="left:62px;top:89px;width:43px"></div>
<div class="ll" style="left:6px;top:93px;width:78px"></div>
<div class="ll" style="left:6px;top:97px;width:68px"></div>
<div class="ll" style="left:6px;top:101px;width:122px"></div>
<div class="ll" style="left:6px;top:105px;width:152px"></div>
<div class="ll" style="left:6px;top:109px;width:152px"></div>
<div class="ll" style="left:6px;top:113px;width:152px"></div>
<div class="ll" style="left:6px;top:117px;width:72px"></div>
<div class="dl" style="left:22px;top:121px;width:122px"></div>
<div class="ll" style="left:11px;top:125px;width:100px"></div>
<div class="ll" style="left:6px;top:130px;width:152px"></div>
<div class="ll" style="left:6px;top:134px;width:24px"></div>
<div class="dl" style="left:11px;top:138px;width:145px"></div>
</div>
</div>
<div class="a" style="left:642px;top:467px;width:192px;height:192px;border-radius:10px;background:#eff2f9;overflow:hidden">
<div class="a" style="left:10px;top:11px;width:14px;height:14px;background:#e04a3f;border-radius:2px"></div>
<div class="t" style="left:11px;top:15px;font-size:6px;font-weight:bold;color:#fde;letter-spacing:-.3px">PDF</div>
<div class="t" style="left:36px;top:12px;font-size:12.2px;color:#1f1f1f;-webkit-text-stroke:.2px #1f1f1f">250008 Онищенко...</div>
<div class="a" style="left:175px;top:12px;width:4px;height:12px;background:radial-gradient(circle,#1f1f1f 1.2px,transparent 1.7px) 0 0/4px 4px"></div>
<div class="a" style="left:4px;top:36px;width:183px;height:150px;background:#c8c8ca;overflow:hidden;filter:blur(.3px)">
<div class="a" style="left:0;top:0;width:183px;height:10px;background:linear-gradient(180deg,#f2eef2,#dcdcde)"></div>
<div class="a" style="left:19px;top:0;width:26px;height:9px;background:#c01a9c;clip-path:polygon(0 0,78% 0,100% 100%,22% 100%)"></div>
<div class="a" style="left:10px;top:2px;width:14px;height:7px;background:#e088e0;opacity:.8"></div>
<div class="a" style="left:0;top:3px;width:14px;height:38px;background:linear-gradient(180deg,#b01890 0,#5a2480 25%,#2a2a6a 50%,#7a2a8a 75%,#b02090 100%);clip-path:polygon(0 0,100% 0,100% 100%,0 78%)"></div>
<div class="a" style="left:0;top:12px;width:9px;height:13px;border-radius:45%;background:radial-gradient(circle,#30304a 0,#30304a 30%,#f0f0f4 45%,#e0e0ea 70%,transparent 75%)"></div>
<div class="t" style="left:35px;top:21px;font-size:13px;font-weight:bold;color:#8e3c8e;letter-spacing:-.5px">Cred</div>
<div class="t" style="left:59px;top:10px;font-size:13px;font-weight:bold;color:#4a3c9c">4</div>
<div class="t" style="left:67px;top:10px;font-size:13px;font-weight:bold;color:#5ab2da;letter-spacing:-.6px">Teach</div>
<div class="a" style="left:75px;top:26px;width:24px;height:2px;background:#b8bcc8"></div>
<div class="a" style="left:117px;top:11px;width:26px;height:18px;background:#2444aa"></div>
<div class="a" style="left:123px;top:14px;width:14px;height:12px;border-radius:50%;border:1px dotted #e8d040"></div>
<div class="a" style="left:146px;top:15px;width:37px;height:3px;background:#8a90a6"></div>
<div class="a" style="left:146px;top:22px;width:34px;height:3px;background:#8a90a6"></div>
<div class="a" style="left:24px;top:35px;width:159px;height:2px;background:#a6a8b4"></div>
<div class="t" style="left:57px;top:42px;font-size:13px;font-weight:bold;color:#0d0d0d;font-family:'Liberation Serif',serif;transform:scaleY(.8);transform-origin:0 0;-webkit-text-stroke:.4px #000">СВІДОЦТВО</div>
<div class="cll" style="left:77px;top:58px;width:40px"></div>
<div class="cdl" style="left:87px;top:66px;width:19px"></div>
<div class="a" style="left:55px;top:86px;width:100px;height:1px;background:#5a5a62"></div>
<div class="cll" style="left:62px;top:91px;width:83px"></div>
<div class="cdl" style="left:65px;top:97px;width:75px"></div>
<div class="cll" style="left:44px;top:106px;width:119px"></div>
<div class="cdl" style="left:42px;top:111px;width:122px"></div>
<div class="cll" style="left:88px;top:119px;width:20px"></div>
<div class="cll" style="left:0px;top:117px;width:21px"></div>
<div class="cll" style="left:0px;top:120px;width:18px"></div>
<div class="cll" style="left:0px;top:123px;width:21px"></div>
<div class="cll" style="left:0px;top:126px;width:16px"></div>
<div class="cll" style="left:42px;top:138px;width:46px"></div>
<div class="cll" style="left:44px;top:143px;width:42px"></div>
<div class="cll" style="left:153px;top:141px;width:30px"></div>
<div class="t" style="left:10px;top:70px;width:170px;text-align:center;font-size:11.5px;font-style:italic;color:#6e6e72;font-family:'Liberation Serif',serif;letter-spacing:.4px">Онищенко Світлані</div>
<div class="a" style="left:1px;top:132px;width:13px;height:16px;background:repeating-linear-gradient(90deg,#3a3a3a 0 2px,#bbb 2px 3px)"></div>
<div class="a" style="left:108px;top:122px;width:45px;height:36px;border-radius:50%;border:2px solid #a0a6cc"></div>
<div class="a" style="left:124px;top:134px;width:10px;height:14px;border:1px solid #8a90b8"></div>
</div>
</div>
<div class="a" style="left:850px;top:467px;width:192px;height:192px;border-radius:10px;background:#eff2f9;overflow:hidden">
<div class="a" style="left:10px;top:11px;width:14px;height:14px;background:#e04a3f;border-radius:2px"></div>
<div class="t" style="left:11px;top:15px;font-size:6px;font-weight:bold;color:#fde;letter-spacing:-.3px">PDF</div>
<div class="t" style="left:36px;top:12px;font-size:12.2px;color:#1f1f1f;-webkit-text-stroke:.2px #1f1f1f">250009 Сівіцкий...</div>
<div class="a" style="left:175px;top:12px;width:4px;height:12px;background:radial-gradient(circle,#1f1f1f 1.2px,transparent 1.7px) 0 0/4px 4px"></div>
<div class="a" style="left:5px;top:36px;width:180px;height:156px;background:#fff"></div>
<div class="a" style="left:13px;top:45px;width:165px;height:141px;border:2px solid #c188dc;border-bottom:none;overflow:hidden;filter:blur(.35px)">
<div class="t" style="left:3px;top:16px;font-size:12.5px;font-weight:bold;color:#6a3a8c;letter-spacing:-.6px">Cred</div>
<div class="t" style="left:26px;top:6px;font-size:12.3px;font-weight:bold;color:#46a6c8;letter-spacing:-.7px">4Teach</div>
<div class="a" style="left:38px;top:21px;width:26px;height:2px;background:#dcd8e4"></div>
<div class="a" style="left:67px;top:2px;width:30px;height:30px;background:#1e2f6a"></div>
<div class="a" style="left:74px;top:8px;width:16px;height:18px;border-radius:50%;background:radial-gradient(circle,#f0ece4 0,#d8cca8 45%,#a89870 60%,#1e2f6a 78%)"></div>
<div class="a" style="left:98px;top:11px;width:19px;height:12px;background:#283e9c"></div>
<div class="a" style="left:119px;top:13px;width:36px;height:2px;background:#c0c4d4"></div>
<div class="a" style="left:119px;top:18px;width:40px;height:2px;background:#c0c4d4"></div>
<div class="ll" style="left:27px;top:39px;width:120px"></div>
<div class="ll" style="left:63px;top:47px;width:48px"></div>
<div class="ll" style="left:76px;top:55px;width:20px"></div>
<div class="dl" style="left:8px;top:63px;width:150px"></div>
<div class="dl" style="left:62px;top:68px;width:43px"></div>
<div class="ll" style="left:6px;top:73px;width:35px"></div>
<div class="ll" style="left:6px;top:77px;width:28px"></div>
<div class="ll" style="left:6px;top:80px;width:50px"></div>
<div class="dl" style="left:20px;top:84px;width:124px"></div>
<div class="dl" style="left:62px;top:89px;width:43px"></div>
<div class="ll" style="left:6px;top:93px;width:78px"></div>
<div class="ll" style="left:6px;top:97px;width:68px"></div>
<div class="ll" style="left:6px;top:101px;width:122px"></div>
<div class="ll" style="left:6px;top:105px;width:152px"></div>
<div class="ll" style="left:6px;top:109px;width:152px"></div>
<div class="ll" style="left:6px;top:113px;width:152px"></div>
<div class="ll" style="left:6px;top:117px;width:72px"></div>
<div class="dl" style="left:22px;top:121px;width:122px"></div>
<div class="ll" style="left:11px;top:125px;width:100px"></div>
<div class="ll" style="left:6px;top:130px;width:152px"></div>
<div class="ll" style="left:6px;top:134px;width:24px"></div>
<div class="dl" style="left:11px;top:138px;width:145px"></div>
</div>
</div>
<div class="a" style="left:1058px;top:467px;width:192px;height:192px;border-radius:10px;background:#eff2f9;overflow:hidden">
<div class="a" style="left:10px;top:11px;width:14px;height:14px;background:#e04a3f;border-radius:2px"></div>
<div class="t" style="left:11px;top:15px;font-size:6px;font-weight:bold;color:#fde;letter-spacing:-.3px">PDF</div>
<div class="t" style="left:36px;top:12px;font-size:12.2px;color:#1f1f1f;-webkit-text-stroke:.2px #1f1f1f">250009 Сівіцкий...</div>
<div class="a" style="left:175px;top:12px;width:4px;height:12px;background:radial-gradient(circle,#1f1f1f 1.2px,transparent 1.7px) 0 0/4px 4px"></div>
<div class="a" style="left:4px;top:36px;width:183px;height:150px;background:#c8c8ca;overflow:hidden;filter:blur(.3px)">
<div class="a" style="left:0;top:0;width:183px;height:10px;background:linear-gradient(180deg,#f2eef2,#dcdcde)"></div>
<div class="a" style="left:19px;top:0;width:26px;height:9px;background:#c01a9c;clip-path:polygon(0 0,78% 0,100% 100%,22% 100%)"></div>
<div class="a" style="left:10px;top:2px;width:14px;height:7px;background:#e088e0;opacity:.8"></div>
<div class="a" style="left:0;top:3px;width:14px;height:38px;background:linear-gradient(180deg,#b01890 0,#5a2480 25%,#2a2a6a 50%,#7a2a8a 75%,#b02090 100%);clip-path:polygon(0 0,100% 0,100% 100%,0 78%)"></div>
<div class="a" style="left:0;top:12px;width:9px;height:13px;border-radius:45%;background:radial-gradient(circle,#30304a 0,#30304a 30%,#f0f0f4 45%,#e0e0ea 70%,transparent 75%)"></div>
<div class="t" style="left:35px;top:21px;font-size:13px;font-weight:bold;color:#8e3c8e;letter-spacing:-.5px">Cred</div>
<div class="t" style="left:59px;top:10px;font-size:13px;font-weight:bold;color:#4a3c9c">4</div>
<div class="t" style="left:67px;top:10px;font-size:13px;font-weight:bold;color:#5ab2da;letter-spacing:-.6px">Teach</div>
<div class="a" style="left:75px;top:26px;width:24px;height:2px;background:#b8bcc8"></div>
<div class="a" style="left:117px;top:11px;width:26px;height:18px;background:#2444aa"></div>
<div class="a" style="left:123px;top:14px;width:14px;height:12px;border-radius:50%;border:1px dotted #e8d040"></div>
<div class="a" style="left:146px;top:15px;width:37px;height:3px;background:#8a90a6"></div>
<div class="a" style="left:146px;top:22px;width:34px;height:3px;background:#8a90a6"></div>
<div class="a" style="left:24px;top:35px;width:159px;height:2px;background:#a6a8b4"></div>
<div class="t" style="left:57px;top:42px;font-size:13px;font-weight:bold;color:#0d0d0d;font-family:'Liberation Serif',serif;transform:scaleY(.8);transform-origin:0 0;-webkit-text-stroke:.4px #000">СВІДОЦТВО</div>
<div class="cll" style="left:77px;top:58px;width:40px"></div>
<div class="cdl" style="left:87px;top:66px;width:19px"></div>
<div class="a" style="left:55px;top:86px;width:100px;height:1px;background:#5a5a62"></div>
<div class="cll" style="left:62px;top:91px;width:83px"></div>
<div class="cdl" style="left:65px;top:97px;width:75px"></div>
<div class="cll" style="left:44px;top:106px;width:119px"></div>
<div class="cdl" style="left:42px;top:111px;width:122px"></div>
<div class="cll" style="left:88px;top:119px;width:20px"></div>
<div class="cll" style="left:0px;top:117px;width:21px"></div>
<div class="cll" style="left:0px;top:120px;width:18px"></div>
<div class="cll" style="left:0px;top:123px;width:21px"></div>
<div class="cll" style="left:0px;top:126px;width:16px"></div>
<div class="cll" style="left:42px;top:138px;width:46px"></div>
<div class="cll" style="left:44px;top:143px;width:42px"></div>
<div class="cll" style="left:153px;top:141px;width:30px"></div>
<div class="t" style="left:10px;top:70px;width:170px;text-align:center;font-size:11.5px;font-style:italic;color:#6e6e72;font-family:'Liberation Serif',serif;letter-spacing:.4px">Сівіцкому Володимиру</div>
<div class="a" style="left:1px;top:132px;width:13px;height:16px;background:repeating-linear-gradient(90deg,#3a3a3a 0 2px,#bbb 2px 3px)"></div>
<div class="a" style="left:108px;top:122px;width:45px;height:36px;border-radius:50%;border:2px solid #a0a6cc"></div>
<div class="a" style="left:124px;top:134px;width:10px;height:14px;border:1px solid #8a90b8"></div>
</div>
</div>
</div><!-- bottom strip of browser -->
<div class="a" style="left:6px;top:913px;width:1516px;height:12px;background:#f8fafd"></div>
<!-- ===== Windows 10 taskbar ===== -->
<div class="a" style="left:6px;top:925px;width:1513px;height:32px;background:#1c2b3b"></div>
<svg style="left:18px;top:935px" width="14" height="14" viewBox="0 0 14 14"><path d="M0 2l6-.9V6.6H0zM7 1l7-1v6.6H7zM0 7.4h6v5.5L0 12zM7 7.4h7V14l-7-1z" fill="#fff"/></svg>
<svg style="left:54px;top:932px" width="18" height="18" viewBox="0 0 18 18"><circle cx="10.5" cy="7" r="5.5" stroke="#fff" stroke-width="1.8" fill="none"/><path d="M6.5 11L1.5 16.5" stroke="#fff" stroke-width="2"/></svg>
<svg style="left:93px;top:934px" width="15" height="14" viewBox="0 0 15 14"><rect x="2" y="3" width="9" height="8" stroke="#fff" stroke-width="1.4" fill="none"/><path d="M0 1h13M0 13h13M13.5 3v8" stroke="#fff" stroke-width="1.2"/></svg>
<div class="a" style="left:125px;top:955px;width:120px;height:2px;background:#88a8d0"></div>
<div class="a" style="left:129px;top:932px;width:19px;height:19px;border-radius:50%;background:radial-gradient(circle,#f6c56a 0,#f0b040 30%,#5ab0e8 55%,#2a78c8 100%)"></div>
<div class="t" style="left:152px;top:936px;font-size:9.4px;color:#fff">Downloads - FreeC...</div>
<div class="a" style="left:249px;top:925px;width:126px;height:32px;background:#3a4756"></div>
<div class="a" style="left:249px;top:955px;width:126px;height:2px;background:#88a8d0"></div>
<div class="a" style="left:256px;top:932px;width:20px;height:20px;border-radius:50%;background:conic-gradient(from -60deg,#ea4335 0 120deg,#fbbc04 120deg 240deg,#34a853 240deg 360deg)"></div>
<div class="a" style="left:261px;top:937px;width:10px;height:10px;border-radius:50%;background:#4285f4;border:2px solid #fff"></div>
<div class="t" style="left:280px;top:936px;font-size:9.4px;color:#fff">Свідоцтва Мікрокв...</div>
<div class="a" style="left:386px;top:932px;width:18px;height:18px;background:#fff;border-radius:1px"></div>
<div class="a" style="left:386px;top:932px;width:12px;height:18px;background:#2b5fb4"></div>
<div class="t" style="left:387px;top:935px;font-size:12px;font-weight:bold;color:#fff">W</div>
<div class="a" style="left:422px;top:955px;width:118px;height:2px;background:#88a8d0"></div>
<div class="a" style="left:424px;top:932px;width:18px;height:18px;background:#f8d0c0;border-radius:1px"></div>
<div class="a" style="left:424px;top:932px;width:12px;height:18px;background:#d24726"></div>
<div class="t" style="left:426px;top:935px;font-size:12px;font-weight:bold;color:#fff">P</div>
<div class="t" style="left:446px;top:936px;font-size:9.4px;color:#fff">Купріянов Cred4Te...</div>
<div class="a" style="left:546px;top:955px;width:118px;height:2px;background:#88a8d0"></div>
<div class="a" style="left:551px;top:932px;width:18px;height:18px;border-radius:50%;background:#2d6ae3"></div>
<div class="t" style="left:553px;top:937px;font-size:9px;font-weight:bold;color:#fff;letter-spacing:-.5px">zm</div>
<div class="t" style="left:573px;top:936px;font-size:9.4px;color:#fff">Zoom Workplace</div>
<div class="a" style="left:672px;top:955px;width:120px;height:2px;background:#88a8d0"></div>
<div class="a" style="left:677px;top:932px;width:18px;height:18px;border-radius:50%;background:#2d6ae3"></div>
<div class="t" style="left:679px;top:937px;font-size:9px;font-weight:bold;color:#fff;letter-spacing:-.5px">zm</div>
<div class="t" style="left:699px;top:936px;font-size:9.4px;color:#fff">Элементы управл...</div>
<!-- tray -->
<svg style="left:1252px;top:937px" width="11" height="7"><path d="M1 6l4.5-4.5L10 6" stroke="#fff" stroke-width="1.3" fill="none"/></svg>
<div class="a" style="left:1270px;top:934px;width:13px;height:13px;background:#3a9ad8;border:1px solid #8ad0ff"></div>
<div class="a" style="left:1289px;top:936px;width:13px;height:9px;background:repeating-linear-gradient(180deg,#e05050 0 2px,#fff 2px 3px)"></div>
<div class="a" style="left:1289px;top:936px;width:6px;height:5px;background:#3050b0"></div>
<div class="a" style="left:1309px;top:935px;width:10px;height:11px;border:1.5px solid #ddd;border-radius:3px"></div>
<div class="a" style="left:1330px;top:934px;width:6px;height:11px;border-radius:3px;background:#eee"></div>
<div class="a" style="left:1332px;top:945px;width:2px;height:4px;background:#eee"></div>
<svg style="left:1345px;top:934px" width="14" height="13" viewBox="0 0 14 13"><path d="M3.5 0L0 2.3l3.5 2.2L7 2.3zM10.5 0L7 2.3l3.5 2.2L14 2.3zM0 6.7L3.5 9 7 6.7 3.5 4.5zM10.5 4.5L7 6.7 10.5 9 14 6.7zM3.5 10l3.5 2.3 3.5-2.3L7 7.8z" fill="#fff"/></svg>
<svg style="left:1364px;top:934px" width="14" height="13" viewBox="0 0 14 13"><rect x="4" y="1" width="9" height="7" stroke="#ddd" stroke-width="1.2" fill="none"/><rect x="0" y="0" width="3" height="4" fill="#ddd"/><path d="M8.5 8v3M5.5 12h6" stroke="#ddd" stroke-width="1.2"/></svg>
<svg style="left:1383px;top:934px" width="13" height="12" viewBox="0 0 13 12"><path d="M0 4h2.5L6 1v10L2.5 8H0z" stroke="#ddd" stroke-width="1" fill="none"/><path d="M8 3.5a3 3 0 0 1 0 5M10 2a5 5 0 0 1 0 8" stroke="#ddd" stroke-width="1" fill="none"/></svg>
<div class="t" style="left:1405px;top:936px;font-size:9px;color:#fff">ENG</div>
<div class="t" style="left:1443px;top:929px;font-size:10px;color:#fff;letter-spacing:0">15:06</div>
<div class="t" style="left:1432px;top:943px;font-size:10px;color:#fff;letter-spacing:0">28.11.2025</div>
<div class="a" style="left:1490px;top:935px;width:13px;height:11px;background:#fff;border-radius:1px"></div>
<div class="a" style="left:1492px;top:937px;width:9px;height:1px;background:#1c2b3b"></div>
<div class="a" style="left:1492px;top:940px;width:9px;height:1px;background:#1c2b3b"></div>
<div class="a" style="left:1518px;top:925px;width:1px;height:32px;background:#6a8aaa"></div>

<!-- ===== Zoom gallery ===== -->
<div class="a" style="left:1526px;top:517px;width:1px;height:27px;background:#bbb"></div><div class="a" style="left:1529px;top:517px;width:1px;height:27px;background:#bbb"></div>
<!-- tile 1 active -->
<div class="a" style="left:1544px;top:320px;width:184px;height:107px;background:linear-gradient(180deg,#e4f07c 0,#b8e44a 40%,#9ada3a 55%,#d8ec78 100%)"></div>
<div class="a" style="left:1548px;top:324px;width:176px;height:99px;background:linear-gradient(90deg,#a8abb0 0,#b0b3b8 35%,#c0c2c5 70%,#cacbcd 100%);overflow:hidden">
  <div class="a" style="left:118px;top:-8px;width:90px;height:6px;background:#e8e8ea;transform:rotate(20deg);transform-origin:0 0;filter:blur(1px)"></div>
  <div class="a" style="left:50px;top:72px;width:90px;height:40px;border-radius:40%;background:#3a3634;filter:blur(2px)"></div>
  <div class="a" style="left:50px;top:44px;width:9px;height:16px;border-radius:50%;background:#b88a74;filter:blur(1px)"></div>
  <div class="a" style="left:117px;top:44px;width:9px;height:16px;border-radius:50%;background:#a87c66;filter:blur(1px)"></div>
  <div class="a" style="left:54px;top:8px;width:68px;height:108px;border-radius:40% 40% 42% 42% / 25% 25% 50% 50%;background:radial-gradient(ellipse at 48% 35%,#e0c4b4 0,#d4b2a0 30%,#c49c86 58%,#a07866 85%);filter:blur(1.5px)"></div>
  <div class="a" style="left:51px;top:-2px;width:72px;height:22px;border-radius:50% 50% 30% 30%;background:radial-gradient(ellipse at 50% 30%,#6a665c 0,#4e4a42 60%,#443f38 100%);filter:blur(1.8px)"></div>
  <div class="a" style="left:51px;top:8px;width:11px;height:42px;border-radius:40%;background:#4a463e;filter:blur(1.8px)"></div>
  <div class="a" style="left:112px;top:8px;width:11px;height:42px;border-radius:40%;background:#4a463e;filter:blur(1.8px)"></div>
  <div class="a" style="left:62px;top:45px;width:20px;height:4px;border-radius:40%;background:#7a5a4a;filter:blur(1.5px)"></div>
  <div class="a" style="left:94px;top:45px;width:20px;height:4px;border-radius:40%;background:#7a5a4a;filter:blur(1.5px)"></div>
  <div class="a" style="left:66px;top:52px;width:16px;height:4px;border-radius:50%;background:#6a4a3c;filter:blur(1.5px)"></div>
  <div class="a" style="left:95px;top:52px;width:16px;height:4px;border-radius:50%;background:#6a4a3c;filter:blur(1.5px)"></div>
  <div class="a" style="left:83px;top:48px;width:11px;height:28px;border-radius:40%;background:#e6cab8;filter:blur(2px)"></div>
  <div class="a" style="left:78px;top:74px;width:20px;height:8px;border-radius:50%;background:#9a6a58;filter:blur(2px)"></div>
  <div class="a" style="left:74px;top:82px;width:30px;height:8px;border-radius:50%;background:#5e4038;filter:blur(2px)"></div>
</div>
<div class="zl" style="left:1548px;top:403px;padding-left:4px;background:rgba(44,42,48,.78)">Oleksandr Kupriyanov</div>
<!-- tile 2 -->
<div class="zt" style="left:1729px;top:324px;width:176px;height:99px"></div>
<div class="zn" style="left:1729px;top:365px;width:176px">Христич Аліна</div>
<div class="zl" style="left:1731px;top:403px;padding-left:21px">Христич Аліна</div>
<svg style="left:1734px;top:405px" width="14" height="16" viewBox="0 0 14 16"><rect x="4.5" y="1" width="5" height="9" rx="2.5" fill="#e04a4a"/><path d="M2.5 7.5a4.5 4.5 0 0 0 9 0M7 12.5v2M4.5 15h5" stroke="#e04a4a" stroke-width="1.3" fill="none"/><path d="M1 15L13 1" stroke="#e04a4a" stroke-width="1.5"/></svg>
<!-- tile 3 -->
<div class="a" style="left:1548px;top:429px;width:176px;height:99px;background:#cdc6b6;overflow:hidden">
  <div class="a" style="left:0;top:0;width:54px;height:36px;background:#86a2a6"></div>
  <div class="a" style="left:4px;top:2px;width:26px;height:17px;background:#4e4e44;filter:blur(.6px)"></div>
  <div class="a" style="left:34px;top:2px;width:18px;height:17px;background:#48463e;filter:blur(.6px)"></div>
  <div class="a" style="left:4px;top:21px;width:26px;height:12px;background:#44443c;filter:blur(.6px)"></div>
  <div class="a" style="left:34px;top:21px;width:18px;height:12px;background:#44443c;filter:blur(.6px)"></div>
  <div class="a" style="left:8px;top:5px;width:9px;height:12px;background:#d8d4c8;filter:blur(.8px)"></div>
  <div class="a" style="left:21px;top:9px;width:7px;height:8px;background:#b04030;filter:blur(.8px)"></div>
  <div class="a" style="left:39px;top:6px;width:8px;height:10px;background:#c8c0b4;filter:blur(1px)"></div>
  <div class="a" style="left:0;top:36px;width:56px;height:7px;background:#ddd4bc"></div>
  <div class="a" style="left:0;top:43px;width:60px;height:56px;background:linear-gradient(180deg,#f2ecdc,#f8f4ea)"></div>
  <div class="a" style="left:34px;top:40px;width:20px;height:16px;border-radius:40%;background:#b09060;filter:blur(2.5px)"></div>
  <div class="a" style="left:56px;top:0;width:76px;height:99px;background:linear-gradient(180deg,#d2cabb,#bca88a)"></div>
  <div class="a" style="left:100px;top:22px;width:24px;height:46px;border-radius:50%;border:2px solid #e0d8c0;opacity:.8;filter:blur(.5px)"></div>
  <div class="a" style="left:120px;top:0;width:12px;height:99px;background:#c4c8c4"></div>
  <div class="a" style="left:132px;top:0;width:8px;height:99px;background:#3a3c3a;filter:blur(.5px)"></div>
  <div class="a" style="left:140px;top:0;width:36px;height:99px;background:linear-gradient(90deg,#7a96a2,#a8bcc6 30%,#6e8a98 55%,#b4c4cc 80%,#8aa0aa)"></div>
  <div class="a" style="left:4px;top:62px;width:150px;height:60px;border-radius:45% 45% 0 0;background:#d2c6d2;filter:blur(1.5px)"></div>
  <div class="a" style="left:56px;top:18px;width:44px;height:64px;border-radius:44% 44% 42% 42%;background:radial-gradient(ellipse at 50% 42%,#e2ccc6 0,#d6bcb4 45%,#c0a49c 80%);filter:blur(1.2px)"></div>
  <div class="a" style="left:52px;top:3px;width:50px;height:26px;border-radius:50% 50% 25% 25%;background:#221e1c;filter:blur(1.2px)"></div>
  <div class="a" style="left:52px;top:12px;width:9px;height:34px;border-radius:40%;background:#221e1c;filter:blur(1.2px)"></div>
  <div class="a" style="left:93px;top:12px;width:9px;height:36px;border-radius:40%;background:#221e1c;filter:blur(1.2px)"></div>
  <div class="a" style="left:62px;top:36px;width:10px;height:4px;border-radius:50%;background:#5a4848;filter:blur(1px)"></div>
  <div class="a" style="left:83px;top:36px;width:10px;height:4px;border-radius:50%;background:#5a4848;filter:blur(1px)"></div>
  <div class="a" style="left:70px;top:55px;width:14px;height:3px;border-radius:50%;background:#a08080;filter:blur(1px)"></div>
</div>
<div class="zl" style="left:1548px;top:508px;padding-left:23px;background:rgba(40,38,44,.85)">Тетяна Одерій</div>
<svg style="left:1551px;top:510px" width="14" height="16" viewBox="0 0 14 16"><rect x="4.5" y="1" width="5" height="9" rx="2.5" fill="#e04a4a"/><path d="M2.5 7.5a4.5 4.5 0 0 0 9 0M7 12.5v2M4.5 15h5" stroke="#e04a4a" stroke-width="1.3" fill="none"/><path d="M1 15L13 1" stroke="#e04a4a" stroke-width="1.5"/></svg>
<!-- tile 4 -->
<div class="zt" style="left:1729px;top:429px;width:176px;height:99px"></div>
<div class="zn" style="left:1729px;top:470px;width:176px">Олександр Шило</div>
<div class="zl" style="left:1731px;top:508px;padding-left:21px">Олександр Шило</div>
<svg style="left:1734px;top:510px" width="14" height="16" viewBox="0 0 14 16"><rect x="4.5" y="1" width="5" height="9" rx="2.5" fill="#e04a4a"/><path d="M2.5 7.5a4.5 4.5 0 0 0 9 0M7 12.5v2M4.5 15h5" stroke="#e04a4a" stroke-width="1.3" fill="none"/><path d="M1 15L13 1" stroke="#e04a4a" stroke-width="1.5"/></svg>
<!-- tile 5 -->
<div class="zt" style="left:1548px;top:534px;width:176px;height:99px"></div>
<div class="zn" style="left:1548px;top:575px;width:176px">Нечуйвітер  Ол...</div>
<div class="zl" style="left:1548px;top:613px;padding-left:22px;max-width:176px;overflow:hidden">Нечуйвітер Олеся ННІ "...</div>
<svg style="left:1551px;top:615px" width="14" height="16" viewBox="0 0 14 16"><rect x="4.5" y="1" width="5" height="9" rx="2.5" fill="#e04a4a"/><path d="M2.5 7.5a4.5 4.5 0 0 0 9 0M7 12.5v2M4.5 15h5" stroke="#e04a4a" stroke-width="1.3" fill="none"/><path d="M1 15L13 1" stroke="#e04a4a" stroke-width="1.5"/></svg>
<!-- tile 6 -->
<div class="zt" style="left:1729px;top:534px;width:176px;height:99px"></div>
<div class="a" style="left:1778px;top:543px;width:80px;height:72px;background:#4a5240;overflow:hidden">
  <div class="a" style="left:0;top:0;width:80px;height:24px;background:radial-gradient(ellipse at 40% 20%,#9a9a7a 0,transparent 35%),radial-gradient(ellipse at 80% 30%,#8a9060 0,transparent 30%),linear-gradient(180deg,#5a6050,#3e4a34);filter:blur(1.5px)"></div>
  <div class="a" style="left:0;top:22px;width:80px;height:10px;background:#72983e;filter:blur(1px)"></div>
  <div class="a" style="left:0;top:32px;width:80px;height:24px;background:linear-gradient(180deg,#a8a060,#8a8a50);filter:blur(1px)"></div>
  <div class="a" style="left:0;top:33px;width:80px;height:2px;background:#222218"></div>
  <div class="a" style="left:0;top:34px;width:80px;height:24px;background:repeating-linear-gradient(90deg,#2a2a20 0 1.5px,transparent 1.5px 5.5px);opacity:.85"></div>
  <div class="a" style="left:0;top:55px;width:80px;height:18px;background:linear-gradient(180deg,#b0b8c0,#7a8088);clip-path:polygon(0 20%,100% 0,100% 100%,0 100%)"></div>
  <div class="a" style="left:34px;top:18px;width:16px;height:18px;border-radius:45%;background:#3a2a24;filter:blur(.8px)"></div>
  <div class="a" style="left:37px;top:22px;width:10px;height:10px;border-radius:45%;background:#c09484;filter:blur(.6px)"></div>
  <div class="a" style="left:31px;top:32px;width:23px;height:28px;border-radius:30% 30% 15% 15%;background:#bc3048;filter:blur(.8px)"></div>
  <div class="a" style="left:26px;top:36px;width:6px;height:22px;border-radius:40%;background:#c8a088;filter:blur(.8px)"></div>
  <div class="a" style="left:33px;top:59px;width:19px;height:14px;background:#2a3050;filter:blur(.8px)"></div>
</div>
<div class="zl" style="left:1731px;top:613px;padding-left:21px">Світлана Онищенко</div>
<svg style="left:1734px;top:615px" width="14" height="16" viewBox="0 0 14 16"><rect x="4.5" y="1" width="5" height="9" rx="2.5" fill="#e04a4a"/><path d="M2.5 7.5a4.5 4.5 0 0 0 9 0M7 12.5v2M4.5 15h5" stroke="#e04a4a" stroke-width="1.3" fill="none"/><path d="M1 15L13 1" stroke="#e04a4a" stroke-width="1.5"/></svg>
<!-- tile 7 -->
<div class="zt" style="left:1548px;top:639px;width:176px;height:99px"></div>
<div class="zn" style="left:1548px;top:680px;width:176px">Харламова Л. Д.</div>
<div class="zl" style="left:1548px;top:718px;padding-left:22px">Харламова Л. Д.</div>
<svg style="left:1551px;top:720px" width="14" height="16" viewBox="0 0 14 16"><rect x="4.5" y="1" width="5" height="9" rx="2.5" fill="#e04a4a"/><path d="M2.5 7.5a4.5 4.5 0 0 0 9 0M7 12.5v2M4.5 15h5" stroke="#e04a4a" stroke-width="1.3" fill="none"/><path d="M1 15L13 1" stroke="#e04a4a" stroke-width="1.5"/></svg>
<!-- tile 8 -->
<div class="zt" style="left:1729px;top:639px;width:176px;height:99px"></div>
<div class="zn" style="left:1729px;top:680px;width:176px">Анна Аніпченко</div>
<div class="zl" style="left:1731px;top:718px;padding-left:21px">Анна Аніпченко</div>
<svg style="left:1734px;top:720px" width="14" height="16" viewBox="0 0 14 16"><rect x="4.5" y="1" width="5" height="9" rx="2.5" fill="#e04a4a"/><path d="M2.5 7.5a4.5 4.5 0 0 0 9 0M7 12.5v2M4.5 15h5" stroke="#e04a4a" stroke-width="1.3" fill="none"/><path d="M1 15L13 1" stroke="#e04a4a" stroke-width="1.5"/></svg>
<!-- ===== Zoom toolbar ===== -->
<svg style="left:38px;top:991px" width="26" height="26" viewBox="0 0 26 26"><rect x="9" y="1" width="8" height="14" rx="4" fill="#c8c8c8"/><path d="M6 11a7 7 0 0 0 14 0M13 18v4M9 22.5h8" stroke="#c8c8c8" stroke-width="1.6" fill="none"/><path d="M2 24L24 1" stroke="#d05050" stroke-width="1.8"/></svg>
<svg style="left:84px;top:1000px" width="10" height="7"><path d="M1 5.5l4-4 4 4" stroke="#ccc" stroke-width="1.5" fill="none"/></svg>
<div class="tb" style="left:10px;top:1021px;font-size:12.4px">Включить звук</div>
<svg style="left:146px;top:991px" width="28" height="27" viewBox="0 0 28 27"><rect x="2" y="6" width="17" height="14" rx="2" fill="#c8c8c8"/><path d="M20 10l6-3.5v13L20 16z" fill="#c8c8c8"/><path d="M1 25.5L26 1" stroke="#d05050" stroke-width="1.8"/></svg>
<svg style="left:201px;top:1000px" width="10" height="7"><path d="M1 5.5l4-4 4 4" stroke="#ccc" stroke-width="1.5" fill="none"/></svg>
<div class="tb" style="left:123px;top:1021px;font-size:11.8px">Начать видео</div>

<svg style="left:597px;top:994px" width="26" height="18" viewBox="0 0 26 18"><circle cx="8" cy="5" r="4" fill="#c8c8c8"/><path d="M0 17c0-5 3.5-7 8-7s8 2 8 7z" fill="#c8c8c8"/><circle cx="17" cy="7" r="3.5" fill="#c8c8c8"/><path d="M12 17.5c0-4 2.5-6.5 5.5-6.5s5.5 2 5.5 6.5z" fill="#c8c8c8"/></svg>
<div class="t" style="left:627px;top:996px;font-size:12px;color:#ccc">8</div>
<svg style="left:659px;top:1000px" width="10" height="7"><path d="M1 5.5l4-4 4 4" stroke="#ccc" stroke-width="1.5" fill="none"/></svg>
<div class="tb" style="left:582px;top:1021px;font-size:12.4px">Участники</div>
<svg style="left:710px;top:994px" width="21" height="20" viewBox="0 0 21 20"><path d="M3 0h15a3 3 0 0 1 3 3v8a3 3 0 0 1-3 3H9l-4.5 5v-5H3a3 3 0 0 1-3-3V3a3 3 0 0 1 3-3z" fill="#c8c8c8"/></svg>
<svg style="left:749px;top:1000px" width="10" height="7"><path d="M1 5.5l4-4 4 4" stroke="#ccc" stroke-width="1.5" fill="none"/></svg>
<div class="tb" style="left:710px;top:1021px;font-size:12.4px">Чат</div>
<div class="a" style="left:823px;top:995px;width:25px;height:19px;border-radius:3px;background:#22c55e"></div>
<svg style="left:830px;top:998px" width="11" height="12" viewBox="0 0 11 12"><path d="M5.5 11V2M1.5 5.5l4-4 4 4" stroke="#0e2a16" stroke-width="1.8" fill="none"/></svg>
<div class="tb" style="left:774px;top:1021px;font-size:12.2px;color:#23d160">Демонстрация экрана</div>
<svg style="left:933px;top:992px" width="23" height="23" viewBox="0 0 23 23"><circle cx="11.5" cy="11.5" r="10.3" stroke="#c8c8c8" stroke-width="1.6" fill="none"/><circle cx="11.5" cy="11.5" r="7.8" fill="#c8c8c8"/></svg>
<div class="tb" style="left:925px;top:1021px;font-size:12.4px">Запись</div>
<div class="a" style="left:1033px;top:995px;width:25px;height:19px;border-radius:3px;background:#c8c8c8"></div>
<div class="t" style="left:1037px;top:999px;font-size:11px;font-weight:bold;color:#1a1a1a">CC</div>
<svg style="left:1089px;top:1000px" width="10" height="7"><path d="M1 5.5l4-4 4 4" stroke="#ccc" stroke-width="1.5" fill="none"/></svg>
<div class="tb" style="left:993px;top:1021px;font-size:11.9px">Показать субтитры</div>
<svg style="left:1136px;top:990px" width="26" height="26" viewBox="0 0 26 26"><circle cx="11" cy="15" r="9.5" fill="#c8c8c8"/><circle cx="7.8" cy="13" r="1.3" fill="#1a1a1a"/><circle cx="14.2" cy="13" r="1.3" fill="#1a1a1a"/><path d="M6.5 16.5a5 5 0 0 0 9 0" stroke="#1a1a1a" stroke-width="1.5" fill="none"/><path d="M21 1v7M17.5 4.5h7" stroke="#c8c8c8" stroke-width="1.6"/></svg>
<div class="tb" style="left:1122px;top:1021px;font-size:12.4px">Реакции</div>
<svg style="left:1222px;top:996px" width="18" height="18" viewBox="0 0 18 18"><path d="M1.5 8V4a3 3 0 0 1 3-3H9M16.5 10v4a3 3 0 0 1-3 3H9" stroke="#c8c8c8" stroke-width="1.8" fill="none"/><circle cx="14" cy="4" r="2.4" stroke="#c8c8c8" stroke-width="1.7" fill="none"/><circle cx="4" cy="14" r="2.4" stroke="#c8c8c8" stroke-width="1.7" fill="none"/></svg>
<div class="tb" style="left:1195px;top:1021px;font-size:12.4px">Приложения</div>
<svg style="left:1323px;top:993px" width="24" height="20" viewBox="0 0 24 20"><path d="M4 15H3a2 2 0 0 1-2-2V3a2 2 0 0 1 2-2h17a2 2 0 0 1 2 2v6" stroke="#c8c8c8" stroke-width="1.7" fill="none"/><rect x="11" y="12" width="12" height="5" rx="2" fill="#c8c8c8"/></svg>
<div class="tb" style="left:1284px;top:1021px;font-size:12.4px">Доски сообщений</div>
<svg style="left:1434px;top:993px" width="18" height="22" viewBox="0 0 18 22"><path d="M13 19H3a2 2 0 0 1-2-2V3a2 2 0 0 1 2-2h10a2 2 0 0 1 2 2v9" stroke="#c8c8c8" stroke-width="1.7" fill="none"/><path d="M5 6h6M5 9.5h6M5 13h4" stroke="#c8c8c8" stroke-width="1.5"/><rect x="8" y="16" width="10" height="5" rx="2" fill="#c8c8c8"/></svg>
<div class="tb" style="left:1407px;top:1021px;font-size:12.4px">Примечания</div>
<div class="a" style="left:1846px;top:1000px;width:62px;height:27px;border-radius:5px;background:linear-gradient(180deg,#c42a26,#c02424)"></div>
<div class="t" style="left:1858px;top:1007px;font-size:11.8px;font-weight:bold;color:#fff">Выйти</div>

<!-- ===== Windows 7 taskbar ===== -->
<div class="a" style="left:0;top:1040px;width:1920px;height:40px;background:linear-gradient(180deg,#3a5478 0,#22406a 10%,#1a365c 50%,#163155 100%)"></div>
<div class="a" style="left:0;top:1040px;width:1920px;height:1px;background:#8aa0b8"></div>
<!-- start orb -->
<div class="a" style="left:8px;top:1042px;width:38px;height:38px;border-radius:50%;background:radial-gradient(circle at 50% 35%,#9ad0f0 0,#3a8ac8 40%,#1a4a8a 70%,#0a2a5a 100%);box-shadow:0 0 2px #9cf"></div>
<svg style="left:16px;top:1051px" width="22" height="20" viewBox="0 0 22 20"><path d="M1 3c3-1.5 6-1.5 9 0v7c-3-1.5-6-1.5-9 0z" fill="#f04a24"/><path d="M11 3c3 1.5 6 1.5 10 0v7c-4 1.5-7 1.5-10 0z" fill="#7ac030"/><path d="M1 11c3-1.5 6-1.5 9 0v7c-3-1.5-6-1.5-9 0z" fill="#2a8ae0"/><path d="M11 11c3 1.5 6 1.5 10 0v7c-4 1.5-7 1.5-10 0z" fill="#f8c020"/></svg>
<!-- explorer -->
<div class="a" style="left:73px;top:1047px;width:32px;height:29px;background:linear-gradient(180deg,#f8eec0 0,#f0dc90 50%,#e0c060 100%);border-radius:3px 3px 1px 1px"></div><div class="a" style="left:77px;top:1049px;width:10px;height:4px;background:#8a9a5a"></div><div class="a" style="left:88px;top:1049px;width:6px;height:4px;background:#c05040"></div>
<div class="a" style="left:79px;top:1063px;width:20px;height:13px;background:linear-gradient(180deg,#9ad0f0,#5aa0d8);border:1px solid #e0f0ff"></div>
<!-- chrome item -->
<div class="a" style="left:123px;top:1042px;width:157px;height:37px;border-radius:3px;background:linear-gradient(180deg,rgba(160,180,205,.55) 0,rgba(100,125,155,.5) 50%,rgba(70,95,125,.5) 100%);border:1px solid rgba(200,215,235,.6)"></div>
<div class="a" style="left:130px;top:1044px;width:33px;height:33px;border-radius:50%;background:conic-gradient(from -60deg,#ea4335 0 120deg,#fbbc04 120deg 240deg,#34a853 240deg 360deg)"></div>
<div class="a" style="left:138px;top:1052px;width:17px;height:17px;border-radius:50%;background:#4285f4;border:3px solid #fff"></div>
<div class="t" style="left:167px;top:1054px;font-size:11.8px;color:#fff">Вхідні - science-u...</div>
<!-- word -->
<div class="a" style="left:297px;top:1045px;width:30px;height:32px;background:#fff;border:1px solid #ccd;transform:skewY(-3deg)"></div>
<div class="a" style="left:300px;top:1050px;width:24px;height:14px;background:linear-gradient(180deg,#3a6cc8,#1a4aa0)"></div>
<div class="t" style="left:303px;top:1050px;font-size:13px;font-weight:bold;font-style:italic;color:#fff">W</div>
<div class="a" style="left:303px;top:1067px;width:20px;height:2px;background:#5a7ac0"></div>
<div class="a" style="left:303px;top:1071px;width:20px;height:2px;background:#5a7ac0"></div>
<!-- zoom item -->
<div class="a" style="left:346px;top:1042px;width:158px;height:37px;border-radius:3px;background:linear-gradient(180deg,rgba(160,180,205,.55) 0,rgba(100,125,155,.5) 50%,rgba(70,95,125,.5) 100%);border:1px solid rgba(200,215,235,.6)"></div>
<div class="a" style="left:354px;top:1044px;width:34px;height:33px;border-radius:50%;background:radial-gradient(circle at 50% 40%,#3a7af0,#1a4ad0)"></div>
<div class="t" style="left:358px;top:1051px;font-size:17px;font-weight:bold;color:#fff;letter-spacing:-1px">zm</div>
<div class="t" style="left:390px;top:1054px;font-size:12px;color:#fff">Zoom</div>
<!-- zoom conf item -->
<div class="a" style="left:504px;top:1042px;width:159px;height:37px;border-radius:3px;background:linear-gradient(180deg,rgba(200,215,235,.7) 0,rgba(140,165,195,.65) 50%,rgba(110,135,165,.6) 100%);border:1px solid rgba(220,230,245,.8)"></div>
<div class="a" style="left:512px;top:1044px;width:34px;height:33px;border-radius:50%;background:radial-gradient(circle at 50% 40%,#3a7af0,#1a4ad0)"></div>
<div class="t" style="left:516px;top:1051px;font-size:17px;font-weight:bold;color:#fff;letter-spacing:-1px">zm</div>
<div class="t" style="left:550px;top:1054px;font-size:11.8px;color:#fff">Zoom Конферен...</div>
<!-- blurred stripe -->
<div class="a" style="left:663px;top:1041px;width:920px;height:8px;background:linear-gradient(90deg,rgba(120,140,160,.4),rgba(90,110,130,.3),rgba(140,150,160,.35));filter:blur(2px)"></div>
<!-- tray -->
<div class="t" style="left:1705px;top:1052px;font-size:12px;color:#fff">UK</div>
<svg style="left:1737px;top:1057px" width="9" height="5"><path d="M0 5L4.5 0 9 5z" fill="#fff"/></svg>
<svg style="left:1757px;top:1051px" width="16" height="16" viewBox="0 0 16 16"><rect x="5" y="2" width="10" height="8" stroke="#fff" stroke-width="1.3" fill="none"/><rect x="1" y="0" width="3" height="5" fill="#fff"/><path d="M10 10v3M6 14h8" stroke="#fff" stroke-width="1.3"/></svg>
<svg style="left:1782px;top:1052px" width="16" height="14" viewBox="0 0 14 13"><path d="M3.5 0L0 2.3l3.5 2.2L7 2.3zM10.5 0L7 2.3l3.5 2.2L14 2.3zM0 6.7L3.5 9 7 6.7 3.5 4.5zM10.5 4.5L7 6.7 10.5 9 14 6.7zM3.5 10l3.5 2.3 3.5-2.3L7 7.8z" fill="#fff"/></svg>
<svg style="left:1806px;top:1052px" width="16" height="14" viewBox="0 0 13 12"><path d="M0 4h2.5L6 1v10L2.5 8H0z" fill="#fff"/><path d="M8 3.5a3 3 0 0 1 0 5M10 2a5 5 0 0 1 0 8" stroke="#fff" stroke-width="1.1" fill="none"/></svg>
<div class="t" style="left:1854px;top:1047px;font-size:11px;color:#fff">15:06</div>
<div class="t" style="left:1840px;top:1064px;font-size:11px;color:#fff">28.11.2025</div>
<div class="a" style="left:1905px;top:1041px;width:15px;height:39px;border-left:1px solid #5a7090;background:linear-gradient(180deg,rgba(150,170,200,.4),rgba(80,100,130,.3))"></div>
<!-- mouse cursor -->
<svg style="left:484px;top:455px" width="13" height="19" viewBox="0 0 13 19"><path d="M0.5 0.5v16l4-4 2.8 6 2.4-1.1-2.8-5.8h5.6z" fill="#fff" stroke="#111" stroke-width="1"/></svg>
</body></html>
